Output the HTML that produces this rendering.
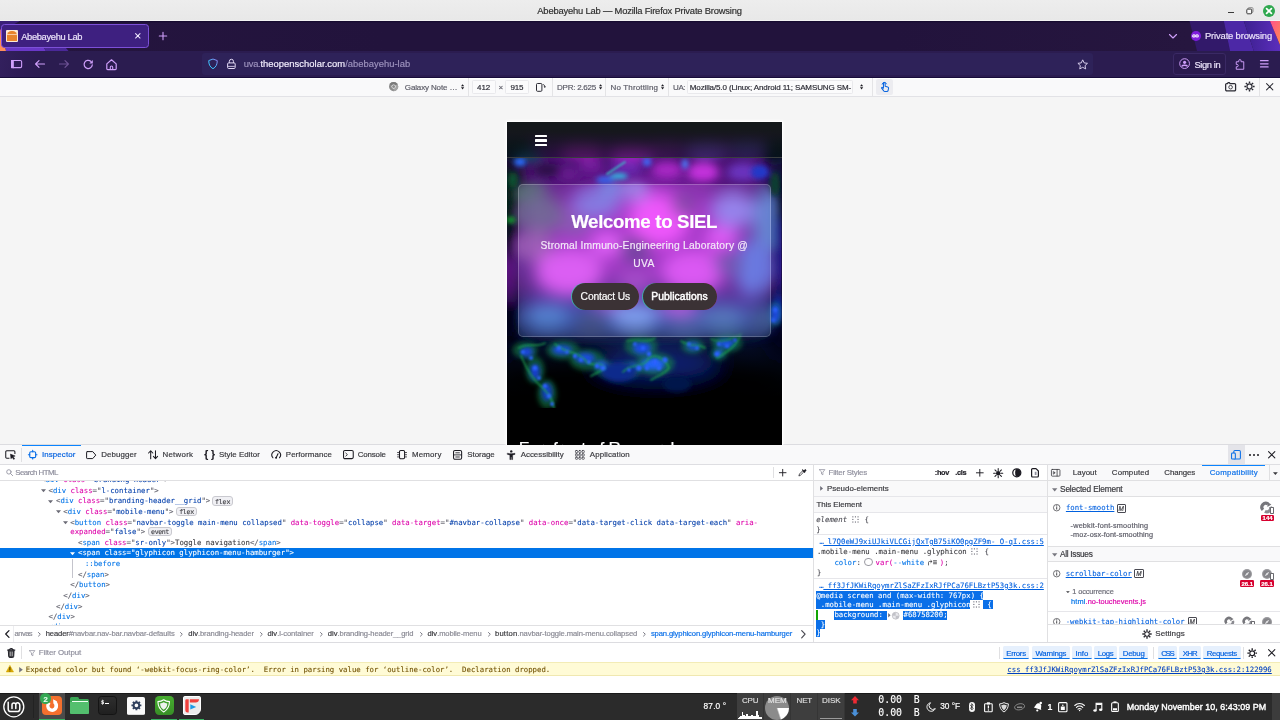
<!DOCTYPE html>
<html lang="en">
<head>
<meta charset="utf-8">
<title>Abebayehu Lab — Mozilla Firefox Private Browsing</title>
<style>
*{box-sizing:border-box;margin:0;padding:0}
html,body{width:1280px;height:720px;overflow:hidden;background:#f5f5f5}
body{font-family:"Liberation Sans",sans-serif;font-size:10px;color:#1c1b22;position:relative}
.abs{position:absolute}
.t{position:absolute;white-space:nowrap;line-height:1;font-family:"Liberation Sans",sans-serif}
.t.mono,.mono{font-family:"DejaVu Sans Mono","Liberation Mono",monospace}
svg{position:absolute;overflow:visible}
#titlebar{left:0;top:0;width:1280px;height:21px;background:linear-gradient(#ededed,#e8e8e8);box-shadow:inset 0 -0.8px 0 #f6f6f6}
#tabbar{left:0;top:21px;width:1280px;height:30px;background:linear-gradient(90deg,#25153f,#22133c 30%,#22133c 70%,#26163f 93%);box-shadow:inset 0 1.2px 0 #170b30;overflow:hidden}
#navbar{left:0;top:51px;width:1280px;height:26.6px;background:#2b1c50;border-bottom:1.4px solid #170c3a;overflow:hidden}
#rdmbar{left:0;top:77.5px;width:1280px;height:19px;background:#f9f9fa;border-bottom:1px solid #e2e2e6;box-shadow:inset 0 1.2px 0 #fff}
#viewport{left:0;top:97px;width:1280px;height:348px;background:#f5f5f5;overflow:hidden}
#phone{overflow:hidden;background:#000;box-shadow:0 0 0 1.2px #fefefe,0 0 4px 1px rgba(255,255,255,.8)}
#devtools{left:0;top:445px;width:1280px;height:247.5px;background:#fff;overflow:hidden}
#taskbar{left:0;top:692.5px;width:1280px;height:27.5px;background:#2b2b2b;box-shadow:inset 0 0.8px 0 #161616;overflow:hidden}
.t{opacity:.999}
.t{-webkit-text-stroke:0.18px currentColor}
.t.mono{-webkit-text-stroke:0.1px currentColor}

</style>
</head>
<body>
<div id="titlebar" class="abs">
<span class="t" style="left:537.30px;top:6.30px;font-size:9.40px;color:#2e2e2e;letter-spacing:-0.191px;">Abebayehu Lab — Mozilla Firefox Private Browsing</span>
<div class="abs" style="left:1228px;top:11.5px;width:6px;height:1.4px;background:#3a3a3a"></div>
<svg style="left:1246px;top:7px" width="8" height="8" viewBox="0 0 8 8" fill="none" stroke-width="1"><rect x="2.100" y="0.700" width="4.900" height="4.700" rx="0.800" stroke="#8e8e8e"/><rect x="0.800" y="2.100" width="4.900" height="4.700" rx="0.800" stroke="#3a3a3a" fill="#fafafa"/></svg>
<div class="abs" style="left:1262.7px;top:4.5px;width:12.2px;height:12.2px;border-radius:50%;background:#2fa84f"></div>
<svg style="left:1265.800px;top:7.600px" width="6" height="6" viewBox="0 0 6 6" stroke="#fff" stroke-width="1.700" stroke-linecap="round"><path d="M0.6 0.6L5.4 5.4M5.4 0.6L0.6 5.4"/></svg>
</div>
<div id="tabbar" class="abs">
<svg style="left:0;top:0" width="1280" height="30" viewBox="0 0 1280 30"><defs><linearGradient id="pk" x1="0" y1="0" x2="1" y2="1"><stop offset="0" stop-color="#ff4f8f"/><stop offset="1" stop-color="#ff8a4f"/></linearGradient><linearGradient id="b3g" x1="0" y1="0" x2="1" y2="0"><stop offset="0" stop-color="#3d2090"/><stop offset="1" stop-color="#5b2ebc"/></linearGradient><linearGradient id="og" x1="0" y1="0" x2="0" y2="1"><stop offset="0" stop-color="#c05a90"/><stop offset="0.35" stop-color="#ff8a55"/><stop offset="1" stop-color="#ff8f5a"/></linearGradient></defs><polygon points="1189.5,0 1223.800,0 1230,30 1197,30" fill="#32196a"/><polygon points="1223.800,0 1243.800,0 1253.800,30 1230,30" fill="#4c28a6"/><polygon points="1243.800,0 1270,0 1280,24 1280,30 1253.800,30" fill="url(#b3g)"/><polygon points="1270,0 1280,0 1280,24" fill="url(#pk)"/><polygon points="0,8 2.500,10 6,30 0,30" fill="url(#og)"/><polygon points="0,0 20,0 3,9 0,8" fill="#3a1f78"/><polygon points="5.500,27 44,27 46,30 6,30" fill="#6a38c8"/><polygon points="44,27 66,27 68.500,30 46,30" fill="#4a2898"/></svg>
<div class="abs" style="left:1.1px;top:3px;width:147.9px;height:24px;border-radius:3.5px;background:#3e2080;border:1px solid #7d50d8"></div>
<div class="abs" style="left:6.3px;top:8.6px;width:11.4px;height:12.4px;background:#fbead8;border-radius:1px"></div>
<div class="abs" style="left:7.2px;top:9.6px;width:9.6px;height:10.6px;background:#e8842c;border-radius:4.5px 4.5px 0.5px 0.5px"></div>
<div class="abs" style="left:7.2px;top:13.2px;width:9.6px;height:0.8px;background:#f8c9a0"></div>
<span class="t" style="left:21.20px;top:11.50px;font-size:9.30px;color:#ece4fb;letter-spacing:-0.319px;">Abebayehu Lab</span>
<svg style="left:135.3px;top:12.3px" width="5.6" height="5.6" viewBox="0 0 6 6" stroke="#f0e8ff" stroke-width="1.1" stroke-linecap="round"><path d="M0.6 0.6L5.4 5.4M5.4 0.6L0.6 5.4"/></svg>
<svg style="left:158.5px;top:11px" width="8" height="8" viewBox="0 0 8 8" stroke="#cf9ffa" stroke-width="1.100" stroke-linecap="round"><path d="M4 0.3V7.7M0.3 4H7.7"/></svg>
<svg style="left:1168.5px;top:12.5px" width="8" height="5" viewBox="0 0 8 5" fill="none" stroke="#cf9ffa" stroke-width="1.150" stroke-linecap="round" stroke-linejoin="round"><path d="M0.5 0.5L4 4L7.5 0.5"/></svg>
<div class="abs" style="left:1190.8px;top:10.2px;width:9.8px;height:9.8px;border-radius:50%;background:#7f1cdc"></div>
<svg style="left:1192.2px;top:13.2px" width="7" height="3.800" viewBox="0 0 14 7.600" fill="none" stroke="#fff" stroke-width="2.300"><ellipse cx="3.900" cy="3.800" rx="2.500" ry="2.300"/><ellipse cx="10.100" cy="3.800" rx="2.500" ry="2.300"/></svg>
<span class="t" style="left:1205.00px;top:10.40px;font-size:9.40px;color:#ece4fb;letter-spacing:-0.145px;">Private browsing</span>
</div>
<div id="navbar" class="abs">
<div class="abs" style="left:0;top:0;width:40px;height:26px;background:linear-gradient(100deg,#33205e 0%,#2e1c56 50%,rgba(43,27,79,0) 100%)"></div>
<svg style="left:10.5px;top:9.1px" width="11.2" height="8.2" viewBox="0 0 11.2 8.2" fill="none" stroke="#cf9ffa" stroke-width="1.100"><rect x="0.550" y="0.550" width="10.100" height="7.100" rx="1.300"/><rect x="0.550" y="0.550" width="1.700" height="7.100" fill="#cf9ffa"/></svg>
<svg style="left:35px;top:9px" width="10" height="8" viewBox="0 0 10 8" fill="none" stroke="#cf9ffa" stroke-width="1.200" stroke-linecap="round" stroke-linejoin="round"><path d="M9.5 4H0.8M4 0.6L0.6 4L4 7.4"/></svg>
<svg style="left:59px;top:9px;opacity:.4" width="10" height="8" viewBox="0 0 10 8" fill="none" stroke="#cf9ffa" stroke-width="1.200" stroke-linecap="round" stroke-linejoin="round"><path d="M0.5 4H9.2M6 0.6L9.4 4L6 7.4"/></svg>
<svg style="left:82.8px;top:8px" width="10.4" height="10.4" viewBox="0 0 20.800 20.800" fill="none" stroke="#cf9ffa" stroke-width="2.500" stroke-linecap="round"><path d="M15.600 4.600A8.200 8.200 0 1 0 18.600 11.600"/><path d="M12.600 8.800H19.600V1.800Z" fill="#cf9ffa" stroke="none"/></svg>
<svg style="left:106.3px;top:7.6px" width="11" height="11.400" viewBox="0 0 22 22.800" fill="none" stroke="#cf9ffa" stroke-width="2.400" stroke-linejoin="round"><path d="M1.600 9.800L11 1.600L20.400 9.800V19.400A1.800 1.800 0 0 1 18.600 21.200H3.400A1.800 1.800 0 0 1 1.600 19.400Z"/><path d="M8.600 21V16.400A2.400 2.400 0 0 1 13.400 16.400V21" stroke-width="2.200"/></svg>
<div class="abs" style="left:202.3px;top:2.2px;width:890.5px;height:21.4px;border-radius:3px;background:#2e2259"></div>
<svg style="left:207.5px;top:6.9px" width="10" height="11.800" viewBox="0 0 19 21" fill="none" stroke="url(#shg)" stroke-width="1.9" stroke-linejoin="round"><defs><linearGradient id="shg" x1="0" y1="1" x2="1" y2="0"><stop offset="0" stop-color="#2fd0ff"/><stop offset="0.55" stop-color="#4cb8ff"/><stop offset="1" stop-color="#9a7cf0"/></linearGradient></defs><path d="M9.5 1.3L17.6 4.2C17.6 11 15.5 16.5 9.5 19.6C3.5 16.5 1.4 11 1.4 4.200L9.5 1.3Z"/></svg>
<svg style="left:226.9px;top:6.9px" width="8.800" height="11.600" viewBox="0 0 17 21" fill="none" stroke="#e6dcf8" stroke-width="1.9" stroke-linejoin="round"><rect x="1.2" y="8.8" width="14.6" height="10.8" rx="2"/><path d="M4.5 8.8V5.8A4 4 0 0 1 12.5 5.8V8.8"/><path d="M2 15.5H15" stroke-width="1.6"/></svg>
<span class="t" style="left:243.80px;top:8.40px;font-size:9.40px;color:#9d92bd;letter-spacing:-0.284px;">uva.</span>
<span class="t" style="left:260.40px;top:8.40px;font-size:9.40px;color:#f4efff;letter-spacing:0.049px;">theopenscholar.com</span>
<span class="t" style="left:345.20px;top:8.40px;font-size:9.40px;color:#9d92bd;letter-spacing:0.026px;">/abebayehu-lab</span>
<svg style="left:1077px;top:7.6px" width="11.4" height="10.8" viewBox="0 0 24 23" fill="none" stroke="#e6dcf8" stroke-width="1.9" stroke-linejoin="round"><path d="M12 1.8L15.1 8.3L22.2 9.200L17 14.100L18.300 21.100L12 17.700L5.700 21.100L7 14.100L1.800 9.200L8.900 8.300Z"/></svg>
<div class="abs" style="left:1173.4px;top:2.2px;width:53px;height:21.6px;border-radius:3px;border:0.8px solid #3a2964;background:#2a1a4e"></div>
<svg style="left:1178.8px;top:7.4px" width="11.2" height="11.2" viewBox="0 0 22 22" fill="none" stroke="#cf9ffa" stroke-width="1.9"><circle cx="11" cy="11" r="9.600"/><circle cx="11" cy="8.6" r="3.100" fill="#cf9ffa" stroke="none"/><path d="M5.200 16.5C7 13.600 15 13.600 16.800 16.500" stroke-width="2.6"/></svg>
<span class="t" style="left:1194.40px;top:9.90px;font-size:9.30px;color:#ece4fb;letter-spacing:-0.348px;">Sign in</span>
<svg style="left:1235.4px;top:7.6px" width="10" height="11" viewBox="0 0 20 22" fill="none" stroke="#cf9ffa" stroke-width="1.9" stroke-linejoin="round"><path d="M7.5 5.500V3.500A2.300 2.300 0 0 1 12.100 3.500V5.500H17.500V20.500H2.500V15.500H4.200A2.300 2.300 0 0 0 4.200 10.900H2.500V5.500Z"/></svg>
<svg style="left:1259.8px;top:9.2px" width="8.6" height="7.6" viewBox="0 0 8.6 7.600" stroke="#cf9ffa" stroke-width="1.250" stroke-linecap="round"><path d="M0.5 0.7H8.100M0.500 3.800H8.100M0.500 6.900H8.100"/></svg>
</div>
<div id="rdmbar" class="abs">
<svg style="left:388.9px;top:4.9px" width="9.2" height="9.200" viewBox="0 0 20 20"><circle cx="10" cy="10" r="10" fill="#8c8c8c"/><path d="M10 10L1.300 5A10 10 0 0 1 18.700 5Z" fill="#7a7a7a"/><path d="M10 10L18.700 5A10 10 0 0 1 10 20Z" fill="#a4a4a4"/><circle cx="10" cy="10" r="4.600" fill="#f9f9fa"/><circle cx="10" cy="10" r="3.300" fill="#8c8c8c"/></svg>
<span class="t" style="left:404.80px;top:6.40px;font-size:8.00px;color:#5b5b66;letter-spacing:-0.135px;">Galaxy Note …</span>
<svg style="left:460.90px;top:6.60px" width="3.2" height="5.600" viewBox="0 0 3.200 5.600" fill="#1c1b22"><path d="M0 2.300L1.600 0.200L3.200 2.300ZM0 3.300L1.600 5.400L3.200 3.300Z"/></svg>
<div class="abs" style="left:468.0px;top:0;width:1px;height:18.5px;background:#e4e4e6"></div>
<div class="abs" style="left:472.1px;top:2.3px;width:23.5px;height:14.3px;border:1px solid #e9e9ec;border-radius:1.5px;background:#fbfbfc"></div>
<span class="t" style="left:477.10px;top:6.40px;font-size:8.00px;color:#2a2a33;letter-spacing:-0.086px;">412</span>
<div class="abs" style="left:505.2px;top:2.3px;width:23.5px;height:14.3px;border:1px solid #e9e9ec;border-radius:1.5px;background:#fbfbfc"></div>
<span class="t" style="left:510.40px;top:6.40px;font-size:8.00px;color:#2a2a33;letter-spacing:-0.086px;">915</span>
<span class="t" style="left:498.40px;top:6.20px;font-size:8.00px;color:#5b5b66;">×</span>
<svg style="left:536.2px;top:5.6px" width="10.5" height="8.8" viewBox="0 0 10.5 8.800" fill="none" stroke="#2a2a33" stroke-width="1"><rect x="0.5" y="0.5" width="5.4" height="7.8" rx="1"/><path d="M6.800 1.600C8.300 1.600 8.800 2.600 8.800 4" stroke-width="0.9"/><path d="M7.600 3.600L8.800 5.100L10 3.600Z" fill="#2a2a33" stroke="none"/></svg>
<div class="abs" style="left:552.0px;top:0;width:1px;height:18.5px;background:#e4e4e6"></div>
<span class="t" style="left:557.10px;top:6.40px;font-size:8.00px;color:#5b5b66;letter-spacing:-0.256px;">DPR: 2.625</span>
<svg style="left:598.80px;top:6.60px" width="3.2" height="5.600" viewBox="0 0 3.200 5.600" fill="#1c1b22"><path d="M0 2.300L1.600 0.200L3.200 2.300ZM0 3.300L1.600 5.400L3.200 3.300Z"/></svg>
<div class="abs" style="left:605.0px;top:0;width:1px;height:18.5px;background:#e4e4e6"></div>
<span class="t" style="left:610.60px;top:6.40px;font-size:8.00px;color:#5b5b66;letter-spacing:0.142px;">No Throttling</span>
<svg style="left:660.90px;top:6.60px" width="3.2" height="5.600" viewBox="0 0 3.200 5.600" fill="#1c1b22"><path d="M0 2.300L1.600 0.200L3.200 2.300ZM0 3.300L1.600 5.400L3.200 3.300Z"/></svg>
<div class="abs" style="left:668.0px;top:0;width:1px;height:18.5px;background:#e4e4e6"></div>
<span class="t" style="left:673.10px;top:6.40px;font-size:8.00px;color:#5b5b66;letter-spacing:-0.481px;">UA:</span>
<div class="abs" style="left:687.2px;top:2.3px;width:166px;height:14.3px;border:1px solid #e9e9ec;border-radius:1.5px;background:#fbfbfc"></div>
<span class="t" style="left:689.80px;top:6.40px;font-size:8.00px;color:#2a2a33;letter-spacing:-0.115px;">Mozilla/5.0 (Linux; Android 11; SAMSUNG SM-</span>
<svg style="left:860.00px;top:6.60px" width="3.2" height="5.600" viewBox="0 0 3.200 5.600" fill="#1c1b22"><path d="M0 2.300L1.600 0.200L3.200 2.300ZM0 3.300L1.600 5.400L3.200 3.300Z"/></svg>
<div class="abs" style="left:871.9px;top:0;width:1px;height:18.5px;background:#e4e4e6"></div>
<div class="abs" style="left:876.4px;top:1.200px;width:16.6px;height:16.6px;border-radius:2px;background:#ececf0"></div>
<svg style="left:879.6px;top:3.9px" width="9.600" height="11.200" viewBox="0 0 18 21" fill="none" stroke="#0a66e0" stroke-width="2" stroke-linecap="round" stroke-linejoin="round"><path d="M6.500 12V4.500A1.600 1.600 0 0 1 9.700 4.500V10L14.500 11.200C15.800 11.600 16.300 12.400 16.100 13.600L15.300 17.500C15 18.800 14.100 19.600 12.800 19.600H9.200C8.100 19.600 7.300 19.100 6.700 18.200L3 13.400C2.600 12.600 3.400 11.700 4.300 12.100L6.500 13.400"/><path d="M4 6A4.300 4.300 0 0 1 12.200 5.300" stroke-width="1.700"/></svg>
<svg style="left:1225px;top:4.6px" width="11.2" height="9.400" viewBox="0 0 22.400 18.800" fill="none" stroke="#2a2a33" stroke-width="2.500" stroke-linejoin="round"><path d="M3.500 3.200H5L6.200 1.400H9L10 3.200H19A2.200 2.200 0 0 1 21.200 5.400V15.400A2.200 2.200 0 0 1 19 17.600H3.500A2.200 2.200 0 0 1 1.300 15.400V5.400A2.200 2.200 0 0 1 3.500 3.200Z"/><circle cx="11.200" cy="10.400" r="3.600" stroke-width="1.700"/></svg>
<svg style="left:1243.90px;top:3.90px" width="11.00" height="11.00" viewBox="-10 -10 20 20" fill="none" stroke="#2a2a33"><circle cx="0" cy="0" r="4.600" stroke-width="2.200"/><path d="M6.20 0.00L9.30 0.00M4.38 4.38L6.58 6.58M0.00 6.20L0.00 9.30M-4.38 4.38L-6.58 6.58M-6.20 0.00L-9.30 0.00M-4.38 -4.38L-6.58 -6.58M-0.00 -6.20L-0.00 -9.30M4.38 -4.38L6.58 -6.58" stroke-width="2.600" stroke-linecap="butt"/></svg>
<div class="abs" style="left:1258.9px;top:0;width:1px;height:18.5px;background:#e4e4e6"></div>
<svg style="left:1266.2px;top:5.900px" width="7.400" height="7.400" viewBox="0 0 8 8" stroke="#2a2a33" stroke-width="1.100" stroke-linecap="round"><path d="M0.600 0.600L7.400 7.400M7.400 0.600L0.600 7.400"/></svg>
</div>
<div id="viewport" class="abs">
<div class="abs" style="left:0;top:347.200px;width:1280px;height:0.800px;background:#dcdce0"></div>
<div id="phone" class="abs" style="left:507.00px;top:25.00px;width:274.67px;height:325.00px">
<svg style="left:0;top:0" width="274.67" height="325" viewBox="0 0 274.67 325">
<defs><filter id="b10" x="-50%" y="-50%" width="200%" height="200%"><feGaussianBlur stdDeviation="10"/></filter><filter id="b6" x="-50%" y="-50%" width="200%" height="200%"><feGaussianBlur stdDeviation="5"/></filter><filter id="b3" x="-50%" y="-50%" width="200%" height="200%"><feGaussianBlur stdDeviation="2.4"/></filter><filter id="b1" x="-50%" y="-50%" width="200%" height="200%"><feGaussianBlur stdDeviation="0.9"/></filter><linearGradient id="basegrad" x1="0" y1="0" x2="0" y2="1"><stop offset="0" stop-color="#3a0f58"/><stop offset="0.16" stop-color="#4c1276"/><stop offset="0.24" stop-color="#5c1888"/><stop offset="0.58" stop-color="#5a1c90"/><stop offset="0.7" stop-color="#2a3aa0"/><stop offset="0.76" stop-color="#040c28"/><stop offset="0.96" stop-color="#000"/></linearGradient><clipPath id="imgclip"><rect x="0" y="0" width="274.67" height="286"/></clipPath></defs>
<rect width="274.67" height="325" fill="#000"/>
<g clip-path="url(#imgclip)">
<rect width="274.67" height="286" fill="url(#basegrad)"/>
<g filter="url(#b10)">
<ellipse cx="137" cy="110" rx="100" ry="50" fill="#9c28c2"/>
<ellipse cx="137" cy="198" rx="120" ry="13" fill="#2c48a8"/>
<ellipse cx="0" cy="70" rx="14" ry="45" fill="#04140c"/>
<ellipse cx="275" cy="70" rx="14" ry="45" fill="#04102c"/>
<ellipse cx="0" cy="200" rx="16" ry="40" fill="#050512"/>
<ellipse cx="275" cy="200" rx="16" ry="40" fill="#050512"/>
<ellipse cx="137" cy="262" rx="150" ry="22" fill="#000"/>
<ellipse cx="150" cy="240" rx="60" ry="16" fill="#0a2070"/>
</g>
<g filter="url(#b6)">
<ellipse cx="40" cy="48" rx="14" ry="7" fill="#2a0a44"/>
<ellipse cx="62" cy="52" rx="10" ry="6" fill="#6a1a90"/>
<ellipse cx="84" cy="44" rx="12" ry="7" fill="#741c9c"/>
<ellipse cx="120" cy="46" rx="16" ry="8" fill="#6a28b0"/>
<ellipse cx="160" cy="48" rx="16" ry="9" fill="#a828c4"/>
<ellipse cx="196" cy="50" rx="16" ry="10" fill="#c432dc"/>
<ellipse cx="236" cy="50" rx="16" ry="9" fill="#6a34c0"/>
<ellipse cx="10" cy="24" rx="16" ry="14" fill="#04141c"/>
<ellipse cx="22" cy="34" rx="12" ry="6" fill="#0a4a60"/>
<ellipse cx="268" cy="26" rx="14" ry="14" fill="#04141c"/>
<ellipse cx="75" cy="28" rx="22" ry="10" fill="#8a1aa4"/>
<ellipse cx="125" cy="30" rx="24" ry="9" fill="#a020c0"/>
<ellipse cx="160" cy="24" rx="16" ry="8" fill="#6a1a90"/>
<ellipse cx="200" cy="26" rx="22" ry="10" fill="#6a3cc0"/>
<ellipse cx="240" cy="24" rx="18" ry="9" fill="#4a3aa0"/>
<ellipse cx="24" cy="72" rx="16" ry="10" fill="#4e6a70"/>
<ellipse cx="34" cy="92" rx="24" ry="18" fill="#66588e"/>
<ellipse cx="88" cy="82" rx="24" ry="15" fill="#7a6ede"/>
<ellipse cx="104" cy="68" rx="12" ry="7" fill="#6a88e4"/>
<ellipse cx="152" cy="98" rx="30" ry="26" fill="#ee46fc"/>
<ellipse cx="176" cy="84" rx="11" ry="10" fill="#6a3a94"/>
<ellipse cx="226" cy="88" rx="22" ry="18" fill="#8c78ea"/>
<ellipse cx="258" cy="100" rx="12" ry="34" fill="#5a7ad0"/>
<ellipse cx="128" cy="70" rx="14" ry="8" fill="#9484ea"/>
<ellipse cx="28" cy="124" rx="18" ry="16" fill="#9450b0"/>
<ellipse cx="62" cy="150" rx="34" ry="24" fill="#d850f2"/>
<ellipse cx="128" cy="128" rx="16" ry="12" fill="#56308c"/>
<ellipse cx="68" cy="104" rx="14" ry="9" fill="#7a50a8"/>
<ellipse cx="128" cy="160" rx="18" ry="10" fill="#a040c8"/>
<ellipse cx="186" cy="150" rx="32" ry="22" fill="#d84af2"/>
<ellipse cx="246" cy="146" rx="18" ry="28" fill="#5c70e0"/>
<ellipse cx="214" cy="116" rx="16" ry="12" fill="#e04cf8"/>
<ellipse cx="100" cy="122" rx="16" ry="12" fill="#e254fa"/>
<ellipse cx="222" cy="142" rx="14" ry="12" fill="#6444a8"/>
<ellipse cx="40" cy="194" rx="22" ry="11" fill="#4478cc"/>
<ellipse cx="84" cy="200" rx="16" ry="9" fill="#34447c"/>
<ellipse cx="128" cy="194" rx="24" ry="12" fill="#7698f0"/>
<ellipse cx="172" cy="186" rx="20" ry="8" fill="#b850e0"/>
<ellipse cx="178" cy="203" rx="18" ry="7" fill="#3c5aa8"/>
<ellipse cx="216" cy="196" rx="22" ry="10" fill="#4a70b8"/>
<ellipse cx="254" cy="198" rx="12" ry="10" fill="#34508c"/>
<ellipse cx="100" cy="182" rx="14" ry="6" fill="#a850d0"/>
<ellipse cx="137" cy="213" rx="122" ry="4" fill="#1c2858"/>
<ellipse cx="3" cy="150" rx="5" ry="36" fill="#5a1478"/>
<ellipse cx="2" cy="100" rx="5" ry="40" fill="#050a0c"/>
<ellipse cx="4" cy="75" rx="6" ry="22" fill="#062014"/>
<ellipse cx="2" cy="200" rx="5" ry="20" fill="#04040c"/>
<ellipse cx="272" cy="120" rx="5" ry="50" fill="#0c1680"/>
<ellipse cx="272" cy="80" rx="4" ry="20" fill="#04100c"/>
<ellipse cx="271" cy="185" rx="5" ry="14" fill="#1838c8"/>
</g>
<g filter="url(#b3)" opacity=".55">
<ellipse cx="18" cy="228" rx="12.5" ry="8.5" fill="#128c48"/>
<ellipse cx="28" cy="248" rx="9.5" ry="13.5" fill="#128c48"/>
<ellipse cx="40" cy="272" rx="9.5" ry="14.5" fill="#128c48"/>
<ellipse cx="56" cy="228" rx="16.5" ry="9.5" fill="#128c48"/>
<ellipse cx="80" cy="238" rx="17.5" ry="10.5" fill="#128c48"/>
<ellipse cx="96" cy="246" rx="10.5" ry="7.5" fill="#128c48"/>
<ellipse cx="134" cy="224" rx="16.5" ry="10.5" fill="#128c48"/>
<ellipse cx="148" cy="242" rx="19.5" ry="11.5" fill="#128c48"/>
<ellipse cx="124" cy="247" rx="11.5" ry="7.5" fill="#128c48"/>
<ellipse cx="186" cy="224" rx="11.5" ry="7.5" fill="#128c48"/>
<ellipse cx="220" cy="221" rx="15.5" ry="9.5" fill="#128c48"/>
<ellipse cx="212" cy="232" rx="8.5" ry="6.5" fill="#128c48"/>
<ellipse cx="268" cy="192" rx="6.5" ry="11.5" fill="#128c48"/>
</g>
<g filter="url(#b3)">
<ellipse cx="13" cy="40" rx="6" ry="4" fill="#2a6cff"/>
<ellipse cx="98" cy="58" rx="9" ry="4" fill="#3a60e8"/>
<ellipse cx="112" cy="54" rx="9" ry="3" fill="#30b8e0"/>
<ellipse cx="140" cy="40" rx="4" ry="4" fill="#3a70ff"/>
<ellipse cx="178" cy="42" rx="3" ry="5" fill="#4a80ff"/>
<ellipse cx="253" cy="50" rx="9" ry="7" fill="#2238c8"/>
<ellipse cx="4" cy="98" rx="5" ry="3" fill="#18b030"/>
<ellipse cx="268" cy="62" rx="5" ry="12" fill="#0a4030"/>
<ellipse cx="6" cy="58" rx="5" ry="8" fill="#0a5030"/>
<ellipse cx="20" cy="230" rx="6" ry="5" fill="#1a44e0"/>
<ellipse cx="28" cy="250" rx="5" ry="8" fill="#183cd0"/>
<ellipse cx="40" cy="270" rx="5" ry="9" fill="#183cd0"/>
<ellipse cx="55" cy="228" rx="10" ry="4.5" fill="#1c4ce4"/>
<ellipse cx="78" cy="236" rx="10" ry="5" fill="#1c4ce4"/>
<ellipse cx="94" cy="243" rx="6" ry="4" fill="#2058ee"/>
<ellipse cx="135" cy="226" rx="9" ry="6" fill="#1c4ce4"/>
<ellipse cx="146" cy="242" rx="12" ry="6" fill="#2264fa"/>
<ellipse cx="125" cy="245" rx="6" ry="4" fill="#1c4ce4"/>
<ellipse cx="186" cy="224" rx="6" ry="4" fill="#1c4ce4"/>
<ellipse cx="219" cy="221" rx="9" ry="4.5" fill="#1c54ea"/>
<ellipse cx="212" cy="231" rx="4" ry="3" fill="#2264fa"/>
<ellipse cx="268" cy="192" rx="5" ry="10" fill="#1c4ce4"/>
<ellipse cx="112" cy="250" rx="18" ry="10" fill="#0c2c8c"/>
<ellipse cx="170" cy="262" rx="14" ry="8" fill="#06184c"/>
</g>
<g filter="url(#b1)" fill="none" stroke="#1fa050" stroke-width="1.800" stroke-linecap="round" opacity=".8">
<path d="M12 226C20 220 30 226 38 221M14 234C20 248 28 260 36 266C44 274 46 280 47 286M48 222C58 232 70 228 80 240C86 246 92 238 98 246C92 250 88 252 84 254"/>
<path d="M120 219C130 216 140 222 148 216M116 250C124 240 136 248 142 236C150 230 160 240 162 246C158 252 150 254 144 258"/>
<path d="M174 219C184 226 192 221 198 226M204 217C214 222 224 217 234 212C230 224 220 230 210 236"/>
<path d="M100 52L118 40" stroke="#30d8c8"/>
</g>
<g filter="url(#b1)" fill="#2c62ff">
<circle cx="16" cy="230" r="2.1"/>
<circle cx="24" cy="236" r="2.0"/>
<circle cx="28" cy="246" r="2.5"/>
<circle cx="32" cy="256" r="1.9"/>
<circle cx="38" cy="264" r="2.3"/>
<circle cx="42" cy="274" r="2.2"/>
<circle cx="45" cy="282" r="1.9"/>
<circle cx="52" cy="226" r="2.3"/>
<circle cx="60" cy="230" r="1.8"/>
<circle cx="68" cy="234" r="2.2"/>
<circle cx="74" cy="238" r="1.9"/>
<circle cx="82" cy="240" r="1.9"/>
<circle cx="90" cy="244" r="2.2"/>
<circle cx="96" cy="246" r="2.6"/>
<circle cx="128" cy="222" r="1.9"/>
<circle cx="136" cy="226" r="2.0"/>
<circle cx="142" cy="232" r="2.4"/>
<circle cx="148" cy="240" r="2.7"/>
<circle cx="152" cy="246" r="2.4"/>
<circle cx="140" cy="246" r="2.2"/>
<circle cx="132" cy="246" r="2.8"/>
<circle cx="122" cy="248" r="1.8"/>
<circle cx="158" cy="238" r="2.7"/>
<circle cx="182" cy="222" r="2.1"/>
<circle cx="190" cy="226" r="1.9"/>
<circle cx="212" cy="222" r="1.9"/>
<circle cx="220" cy="224" r="2.1"/>
<circle cx="210" cy="232" r="2.6"/>
<circle cx="228" cy="218" r="2.0"/>
<circle cx="268" cy="188" r="2.4"/>
<circle cx="266" cy="198" r="2.4"/>
</g>
</g>
</svg>
<div class="abs" style="left:0;top:0;width:100%;height:36px;background:linear-gradient(180deg,rgba(20,24,26,1) 0%,rgba(20,24,26,.97) 25%,rgba(10,14,18,.45) 100%);-webkit-backdrop-filter:blur(5px);backdrop-filter:blur(5px);border-bottom:0.7px solid rgba(255,255,255,.16)"></div>
<div class="abs" style="left:28.2px;top:13.00px;width:12px;height:2.2px;border-radius:.6px;background:#fff"></div>
<div class="abs" style="left:28.2px;top:17.40px;width:12px;height:2.2px;border-radius:.6px;background:#fff"></div>
<div class="abs" style="left:28.2px;top:21.80px;width:12px;height:2.2px;border-radius:.6px;background:#fff"></div>
<div class="abs" style="left:10.7px;top:62.400px;width:253.3px;height:152.800px;border-radius:5px;background:rgba(255,255,255,.085);border:0.7px solid rgba(255,255,255,.22);-webkit-backdrop-filter:blur(7px);backdrop-filter:blur(7px);box-shadow:0 2px 8px rgba(0,0,0,.25)"></div>
<span class="t" style="left:64.20px;top:91.00px;font-size:18.67px;color:#fff;font-weight:bold;letter-spacing:-0.334px;">Welcome to SIEL</span>
<span class="t" style="left:33.50px;top:119.20px;font-size:10.30px;color:#f3e9f8;letter-spacing:0.210px;">Stromal Immuno-Engineering Laboratory @</span>
<span class="t" style="left:126.20px;top:136.60px;font-size:10.30px;color:#f3e9f8;letter-spacing:0.393px;">UVA</span>
<div class="abs" style="left:64.15px;top:160.65px;width:68.20px;height:27.7px;border-radius:13.85px;opacity:.75;background:linear-gradient(60deg,#2ec8a4 0%,#2ec8a4 30%,#ff2a9c 70%,#ff2a9c 100%)"></div>
<div class="abs" style="left:64.50px;top:161px;width:67.50px;height:27px;border-radius:13.5px;background:#3b3235"></div>
<div class="abs" style="left:135.15px;top:160.65px;width:75.20px;height:27.7px;border-radius:13.85px;opacity:.75;background:linear-gradient(60deg,#2ec8a4 0%,#2ec8a4 30%,#ff2a9c 70%,#ff2a9c 100%)"></div>
<div class="abs" style="left:135.50px;top:161px;width:74.50px;height:27px;border-radius:13.5px;background:#3b3235"></div>
<span class="t" style="left:73.60px;top:170.20px;font-size:10.30px;color:#fff;letter-spacing:-0.154px;">Contact Us</span>
<span class="t" style="left:144.30px;top:170.20px;font-size:10.30px;color:#fff;letter-spacing:0.081px;-webkit-text-stroke:0.45px #fff;">Publications</span>
<span class="t" style="left:11.75px;top:318.20px;font-size:17.20px;color:#fff;letter-spacing:-0.295px;">Forefront of Research</span>
</div>
</div>
<div id="devtools" class="abs">
<div class="abs" style="left:0.00px;top:0.00px;width:1280.00px;height:20.00px;background:#f9f9fa;border-bottom:1px solid #dedee2"></div>
<div class="abs" style="left:22.00px;top:0.00px;width:59.00px;height:1.40px;background:#0a84ff"></div>
<svg style="left:5px;top:5.4px" width="11.4" height="9.6" viewBox="0 0 23 19" fill="none" stroke="#1c1b22" stroke-width="2.1" stroke-linejoin="round"><path d="M9 16.500H3.500A2 2 0 0 1 1.500 14.500V3.500A2 2 0 0 1 3.500 1.500H18A2 2 0 0 1 20 3.500V8"/><path d="M11 8L20.500 12L16.500 13.500L19.500 17.500L17.500 18.800L14.700 14.800L12 17.500Z" fill="#1c1b22" stroke-width="1"/></svg>
<div class="abs" style="left:21.30px;top:3.00px;width:1.00px;height:14.00px;background:#e0e0e2"></div>
<span class="t" style="left:41.90px;top:6.40px;font-size:7.90px;color:#0060df;letter-spacing:0.126px;">Inspector</span>
<span class="t" style="left:101.25px;top:6.40px;font-size:7.90px;color:#38383d;letter-spacing:0.104px;">Debugger</span>
<span class="t" style="left:162.50px;top:6.40px;font-size:7.90px;color:#38383d;letter-spacing:0.264px;">Network</span>
<span class="t" style="left:218.90px;top:6.40px;font-size:7.90px;color:#38383d;letter-spacing:0.062px;">Style Editor</span>
<span class="t" style="left:285.80px;top:6.40px;font-size:7.90px;color:#38383d;letter-spacing:0.084px;">Performance</span>
<span class="t" style="left:357.70px;top:6.40px;font-size:7.90px;color:#38383d;letter-spacing:-0.122px;">Console</span>
<span class="t" style="left:412.00px;top:6.40px;font-size:7.90px;color:#38383d;letter-spacing:0.167px;">Memory</span>
<span class="t" style="left:467.30px;top:6.40px;font-size:7.90px;color:#38383d;letter-spacing:-0.034px;">Storage</span>
<span class="t" style="left:520.70px;top:6.40px;font-size:7.90px;color:#38383d;letter-spacing:0.009px;">Accessibility</span>
<span class="t" style="left:589.80px;top:6.40px;font-size:7.90px;color:#38383d;letter-spacing:0.126px;">Application</span>
<svg style="left:27.60px;top:5.00px" width="9.40" height="9.40" viewBox="0 0 19 19" fill="none" stroke="#0a6fe8" stroke-width="2.30" stroke-linejoin="round" stroke-linecap="round"><rect x="3.500" y="3.500" width="12" height="12" rx="2.500"/><path d="M9.500 0.800V3.500M9.500 15.500V18.200M0.800 9.500H3.500M15.500 9.500H18.200"/></svg>
<svg style="left:86.40px;top:5.60px" width="10.50" height="8.20" viewBox="0 0 21 16.400" fill="none" stroke="#1c1b22" stroke-width="2.00" stroke-linejoin="round" stroke-linecap="round"><path d="M2.500 1.200H13.500L19.600 8.200L13.500 15.200H2.500A1.300 1.300 0 0 1 1.200 13.900V2.500A1.300 1.300 0 0 1 2.500 1.200Z"/></svg>
<svg style="left:147.70px;top:5.20px" width="10.20" height="9.40" viewBox="0 0 20.400 18.800" fill="none" stroke="#1c1b22" stroke-width="2.10" stroke-linejoin="round" stroke-linecap="round"><path d="M5.400 17.500V1.800M1.200 6L5.400 1.500L9.600 6M15 1.300V17M10.800 12.800L15 17.300L19.200 12.800"/></svg>
<span class="t" style="left:204.30px;top:5.00px;font-size:10.20px;color:#1c1b22;font-weight:bold;letter-spacing:2.731px;">{}</span>
<svg style="left:270.90px;top:5.20px" width="10.40" height="9.40" viewBox="0 0 20.800 18.800" fill="none" stroke="#1c1b22" stroke-width="2.10" stroke-linejoin="round" stroke-linecap="round"><path d="M3.800 15.500A8.600 8.600 0 1 1 17 15.500"/><path d="M10.400 15.300L14 7.500" stroke-width="2.200"/><circle cx="10.200" cy="15.600" r="2" fill="#1c1b22" stroke="none"/></svg>
<svg style="left:342.80px;top:5.30px" width="10.80" height="9.20" viewBox="0 0 21.600 18.400" fill="none" stroke="#1c1b22" stroke-width="2.10" stroke-linejoin="round" stroke-linecap="round"><rect x="1.100" y="1.100" width="19.400" height="16.200" rx="2.600"/><path d="M5.600 6.200L8.800 9.200L5.600 12.200" stroke-width="1.700"/></svg>
<svg style="left:397.20px;top:5.20px" width="10.10" height="9.40" viewBox="0 0 20.200 18.800" fill="none" stroke="#1c1b22" stroke-width="2.10" stroke-linejoin="round" stroke-linecap="round"><rect x="5" y="1.200" width="10.200" height="16.400" rx="2.400"/><path d="M1 5H4M1 9.400H4M1 13.800H4M16.200 5H19.200M16.200 9.400H19.200M16.200 13.800H19.200" stroke-width="1.500"/></svg>
<svg style="left:453.00px;top:5.00px" width="9.20" height="9.80" viewBox="0 0 18.400 19.600" fill="none" stroke="#1c1b22" stroke-width="2.10" stroke-linejoin="round" stroke-linecap="round"><rect x="1.100" y="1.100" width="16.200" height="17.400" rx="2.800"/><path d="M1.500 9.800H17M5.600 5.600H12.800M5.600 14H12.800" stroke-width="1.700"/></svg>
<svg style="left:506.50px;top:4.80px" width="8.50" height="10.20" viewBox="0 0 17 20.400" fill="none" stroke="#1c1b22" stroke-width="1.00" stroke-linejoin="round" stroke-linecap="round"><circle cx="8.500" cy="2.800" r="2.400" fill="#1c1b22" stroke="none"/><path d="M1.200 6.600C5 7.600 12 7.600 15.800 6.600V8.800L11.200 9.800V19.200H9.400V14H7.600V19.200H5.800V9.800L1.200 8.800Z" fill="#1c1b22" stroke-width="1"/></svg>
<svg style="left:575.00px;top:5.00px" width="10.10" height="10.10" viewBox="0 0 20.200 20.200" fill="none" stroke="#3a3a42" stroke-width="1.50" stroke-linejoin="round" stroke-linecap="round"><rect x="1.0" y="1.0" width="4.400" height="4.400" rx="1.300"/><rect x="7.6" y="1.0" width="4.400" height="4.400" rx="1.300"/><rect x="14.2" y="1.0" width="4.400" height="4.400" rx="1.300"/><rect x="1.0" y="7.6" width="4.400" height="4.400" rx="1.300"/><rect x="7.6" y="7.6" width="4.400" height="4.400" rx="1.300"/><rect x="14.2" y="7.6" width="4.400" height="4.400" rx="1.300"/><rect x="1.0" y="14.2" width="4.400" height="4.400" rx="1.300"/><rect x="7.6" y="14.2" width="4.400" height="4.400" rx="1.300"/><rect x="14.2" y="14.2" width="4.400" height="4.400" rx="1.300"/></svg>
<div class="abs" style="left:1228.00px;top:0.30px;width:16.80px;height:18.60px;background:#e4e4e9"></div>
<svg style="left:1231.20px;top:5.00px" width="10.00" height="9.60" viewBox="0 0 20 19.200" fill="none" stroke="#0a6fe8" stroke-width="2.10" stroke-linejoin="round" stroke-linecap="round"><rect x="5.600" y="1.100" width="13.200" height="17" rx="2.200"/><rect x="1.100" y="6" width="7.600" height="12.100" rx="1.800" fill="#e4e4e9"/></svg>
<div class="abs" style="left:1249.00px;top:8.90px;width:1.90px;height:1.90px;background:#1c1b22;border-radius:50%"></div>
<div class="abs" style="left:1252.90px;top:8.90px;width:1.90px;height:1.90px;background:#1c1b22;border-radius:50%"></div>
<div class="abs" style="left:1256.80px;top:8.90px;width:1.90px;height:1.90px;background:#1c1b22;border-radius:50%"></div>
<svg style="left:1267.60px;top:6.00px" width="7.40" height="7.40" viewBox="0 0 8 8" fill="none" stroke="#1c1b22" stroke-width="1.15" stroke-linejoin="round" stroke-linecap="round"><path d="M0.600 0.600L7.400 7.400M7.400 0.600L0.600 7.400"/></svg>
<div class="abs" style="left:0.00px;top:20.00px;width:813.00px;height:16.20px;background:#fff;border-bottom:1px solid #e0e0e2"></div>
<svg style="left:5.50px;top:23.80px" width="7.20" height="7.20" viewBox="0 0 14.400 14.400" fill="none" stroke="#8f8f9d" stroke-width="1.70" stroke-linejoin="round" stroke-linecap="round"><circle cx="5.800" cy="5.800" r="4.400"/><path d="M9.200 9.200L13.400 13.400"/></svg>
<span class="t" style="left:15.30px;top:24.30px;font-size:7.90px;color:#8f8f9d;letter-spacing:-0.562px;">Search HTML</span>
<div class="abs" style="left:772.50px;top:22.00px;width:1.00px;height:11.00px;background:#e0e0e2"></div>
<svg style="left:779.40px;top:24.00px" width="7.40" height="7.40" viewBox="0 0 8 8" fill="none" stroke="#1c1b22" stroke-width="1.00" stroke-linejoin="round" stroke-linecap="round"><path d="M4 0.400V7.600M0.400 4H7.600"/></svg>
<svg style="left:798.20px;top:23.40px" width="8.60" height="8.60" viewBox="0 0 17.200 17.200" fill="none" stroke="#1c1b22" stroke-width="1.50" stroke-linejoin="round" stroke-linecap="round"><path d="M2 15.200L3 12L9.600 5.400L11.800 7.600L5.200 14.200Z" stroke-width="1.500"/><path d="M9 3.800L13.400 8.200" stroke-width="2.200"/><path d="M10.800 6.400L13.600 3.600A1.500 1.500 0 0 1 15.700 5.700L12.900 8.500" fill="#1c1b22" stroke-width="1.600"/></svg>
<div class="abs" style="left:0.00px;top:36.00px;width:813.00px;height:143.60px;background:#fff"></div>
<div class="abs" style="left:0;top:36px;width:813px;height:12px;overflow:hidden"><div class="abs" style="left:0;top:-36px"><span class="t mono" style="left:41.20px;top:30.60px;font-size:7.32px;color:#5b5b66;">&lt;</span><span class="t mono" style="left:45.61px;top:30.60px;font-size:7.32px;color:#0074e8;letter-spacing:0.002px;">div</span><span class="t mono" style="left:58.83px;top:30.60px;font-size:7.32px;color:#5b5b66;"> </span><span class="t mono" style="left:63.24px;top:30.60px;font-size:7.32px;color:#dd00a9;letter-spacing:0.005px;">class</span><span class="t mono" style="left:85.28px;top:30.60px;font-size:7.32px;color:#5b5b66;letter-spacing:0.002px;">="</span><span class="t mono" style="left:94.10px;top:30.60px;font-size:7.32px;color:#003eaa;letter-spacing:0.005px;">branding-header</span><span class="t mono" style="left:160.22px;top:30.60px;font-size:7.32px;color:#5b5b66;letter-spacing:0.002px;">"&gt;</span></div></div>
<svg style="left:41.00px;top:42.90px" width="5.0" height="5.0" viewBox="0 0 5.0 5.0" fill="#6b6b76"><path d="M0 1.2H5.0L2.50 4.2Z"/></svg>
<span class="t mono" style="left:48.50px;top:41.50px;font-size:7.32px;color:#5b5b66;">&lt;</span><span class="t mono" style="left:52.91px;top:41.50px;font-size:7.32px;color:#0074e8;letter-spacing:0.002px;">div</span><span class="t mono" style="left:66.13px;top:41.50px;font-size:7.32px;color:#5b5b66;"> </span><span class="t mono" style="left:70.54px;top:41.50px;font-size:7.32px;color:#dd00a9;letter-spacing:0.005px;">class</span><span class="t mono" style="left:92.58px;top:41.50px;font-size:7.32px;color:#5b5b66;letter-spacing:0.002px;">="</span><span class="t mono" style="left:101.40px;top:41.50px;font-size:7.32px;color:#003eaa;letter-spacing:0.005px;">l-container</span><span class="t mono" style="left:149.88px;top:41.50px;font-size:7.32px;color:#5b5b66;letter-spacing:0.002px;">"&gt;</span>
<svg style="left:48.30px;top:53.70px" width="5.0" height="5.0" viewBox="0 0 5.0 5.0" fill="#6b6b76"><path d="M0 1.2H5.0L2.50 4.2Z"/></svg>
<span class="t mono" style="left:56.00px;top:52.20px;font-size:7.32px;color:#5b5b66;">&lt;</span><span class="t mono" style="left:60.41px;top:52.20px;font-size:7.32px;color:#0074e8;letter-spacing:0.002px;">div</span><span class="t mono" style="left:73.63px;top:52.20px;font-size:7.32px;color:#5b5b66;"> </span><span class="t mono" style="left:78.04px;top:52.20px;font-size:7.32px;color:#dd00a9;letter-spacing:0.005px;">class</span><span class="t mono" style="left:100.08px;top:52.20px;font-size:7.32px;color:#5b5b66;letter-spacing:0.002px;">="</span><span class="t mono" style="left:108.90px;top:52.20px;font-size:7.32px;color:#003eaa;letter-spacing:0.005px;">branding-header__grid</span><span class="t mono" style="left:201.46px;top:52.20px;font-size:7.32px;color:#5b5b66;letter-spacing:0.002px;">"&gt;</span>
<div class="abs" style="left:212.00px;top:51.40px;width:21.20px;height:9.20px;border:0.7px solid #c9c9cf;border-radius:3px;background:#f0f0f4"></div><span class="t mono" style="left:215.00px;top:53.50px;font-size:6.60px;color:#38383d;letter-spacing:-0.173px;">flex</span>
<svg style="left:55.70px;top:64.20px" width="5.0" height="5.0" viewBox="0 0 5.0 5.0" fill="#6b6b76"><path d="M0 1.2H5.0L2.50 4.2Z"/></svg>
<span class="t mono" style="left:63.30px;top:62.80px;font-size:7.32px;color:#5b5b66;">&lt;</span><span class="t mono" style="left:67.71px;top:62.80px;font-size:7.32px;color:#0074e8;letter-spacing:0.002px;">div</span><span class="t mono" style="left:80.93px;top:62.80px;font-size:7.32px;color:#5b5b66;"> </span><span class="t mono" style="left:85.34px;top:62.80px;font-size:7.32px;color:#dd00a9;letter-spacing:0.005px;">class</span><span class="t mono" style="left:107.38px;top:62.80px;font-size:7.32px;color:#5b5b66;letter-spacing:0.002px;">="</span><span class="t mono" style="left:116.20px;top:62.80px;font-size:7.32px;color:#003eaa;letter-spacing:0.005px;">mobile-menu</span><span class="t mono" style="left:164.68px;top:62.80px;font-size:7.32px;color:#5b5b66;letter-spacing:0.002px;">"&gt;</span>
<div class="abs" style="left:176.20px;top:62.00px;width:20.60px;height:9.20px;border:0.7px solid #c9c9cf;border-radius:3px;background:#f0f0f4"></div><span class="t mono" style="left:179.20px;top:64.10px;font-size:6.60px;color:#38383d;letter-spacing:-0.323px;">flex</span>
<svg style="left:63.10px;top:74.80px" width="5.0" height="5.0" viewBox="0 0 5.0 5.0" fill="#6b6b76"><path d="M0 1.2H5.0L2.50 4.2Z"/></svg>
<span class="t mono" style="left:70.30px;top:74.00px;font-size:7.32px;color:#5b5b66;">&lt;</span><span class="t mono" style="left:74.71px;top:74.00px;font-size:7.32px;color:#0074e8;letter-spacing:0.004px;">button</span><span class="t mono" style="left:101.16px;top:74.00px;font-size:7.32px;color:#5b5b66;"> </span><span class="t mono" style="left:105.56px;top:74.00px;font-size:7.32px;color:#dd00a9;letter-spacing:0.005px;">class</span><span class="t mono" style="left:127.60px;top:74.00px;font-size:7.32px;color:#5b5b66;letter-spacing:0.002px;">="</span><span class="t mono" style="left:136.42px;top:74.00px;font-size:7.32px;color:#003eaa;letter-spacing:0.005px;">navbar-toggle main-menu collapsed</span><span class="t mono" style="left:281.88px;top:74.00px;font-size:7.32px;color:#5b5b66;letter-spacing:0.002px;">" </span><span class="t mono" style="left:290.70px;top:74.00px;font-size:7.32px;color:#dd00a9;letter-spacing:0.005px;">data-toggle</span><span class="t mono" style="left:339.19px;top:74.00px;font-size:7.32px;color:#5b5b66;letter-spacing:0.002px;">="</span><span class="t mono" style="left:348.00px;top:74.00px;font-size:7.32px;color:#003eaa;letter-spacing:0.004px;">collapse</span><span class="t mono" style="left:383.27px;top:74.00px;font-size:7.32px;color:#5b5b66;letter-spacing:0.002px;">" </span><span class="t mono" style="left:392.08px;top:74.00px;font-size:7.32px;color:#dd00a9;letter-spacing:0.005px;">data-target</span><span class="t mono" style="left:440.57px;top:74.00px;font-size:7.32px;color:#5b5b66;letter-spacing:0.002px;">="</span><span class="t mono" style="left:449.39px;top:74.00px;font-size:7.32px;color:#003eaa;letter-spacing:0.005px;">#navbar-collapse</span><span class="t mono" style="left:519.92px;top:74.00px;font-size:7.32px;color:#5b5b66;letter-spacing:0.002px;">" </span><span class="t mono" style="left:528.73px;top:74.00px;font-size:7.32px;color:#dd00a9;letter-spacing:0.005px;">data-once</span><span class="t mono" style="left:568.40px;top:74.00px;font-size:7.32px;color:#5b5b66;letter-spacing:0.002px;">="</span><span class="t mono" style="left:577.22px;top:74.00px;font-size:7.32px;color:#003eaa;letter-spacing:0.005px;">data-target-click data-target-each</span><span class="t mono" style="left:727.09px;top:74.00px;font-size:7.32px;color:#5b5b66;letter-spacing:0.002px;">" </span><span class="t mono" style="left:735.91px;top:74.00px;font-size:7.32px;color:#dd00a9;letter-spacing:0.005px;">aria-</span>
<span class="t mono" style="left:70.30px;top:82.80px;font-size:7.32px;color:#dd00a9;letter-spacing:0.004px;">expanded</span><span class="t mono" style="left:105.56px;top:82.80px;font-size:7.32px;color:#5b5b66;letter-spacing:0.002px;">="</span><span class="t mono" style="left:114.38px;top:82.80px;font-size:7.32px;color:#003eaa;letter-spacing:0.005px;">false</span><span class="t mono" style="left:136.42px;top:82.80px;font-size:7.32px;color:#5b5b66;letter-spacing:0.002px;">"&gt;</span>
<div class="abs" style="left:148.10px;top:82.00px;width:23.70px;height:9.20px;border:0.7px solid #c9c9cf;border-radius:3px;background:#f0f0f4"></div><span class="t mono" style="left:151.10px;top:84.10px;font-size:6.60px;color:#38383d;letter-spacing:-0.432px;">event</span>
<span class="t mono" style="left:78.00px;top:94.00px;font-size:7.32px;color:#5b5b66;">&lt;</span><span class="t mono" style="left:82.41px;top:94.00px;font-size:7.32px;color:#0074e8;letter-spacing:0.002px;">span</span><span class="t mono" style="left:100.04px;top:94.00px;font-size:7.32px;color:#5b5b66;"> </span><span class="t mono" style="left:104.45px;top:94.00px;font-size:7.32px;color:#dd00a9;letter-spacing:0.005px;">class</span><span class="t mono" style="left:126.49px;top:94.00px;font-size:7.32px;color:#5b5b66;letter-spacing:0.002px;">="</span><span class="t mono" style="left:135.30px;top:94.00px;font-size:7.32px;color:#003eaa;letter-spacing:0.004px;">sr-only</span><span class="t mono" style="left:166.16px;top:94.00px;font-size:7.32px;color:#5b5b66;letter-spacing:0.002px;">"&gt;</span><span class="t mono" style="left:174.98px;top:94.00px;font-size:7.32px;color:#38383d;letter-spacing:0.005px;">Toggle navigation</span><span class="t mono" style="left:249.91px;top:94.00px;font-size:7.32px;color:#5b5b66;letter-spacing:0.002px;">&lt;/</span><span class="t mono" style="left:258.73px;top:94.00px;font-size:7.32px;color:#0074e8;letter-spacing:0.002px;">span</span><span class="t mono" style="left:276.36px;top:94.00px;font-size:7.32px;color:#5b5b66;">&gt;</span>
<div class="abs" style="left:0.00px;top:102.60px;width:813.00px;height:10.80px;background:#0074e8"></div>
<svg style="left:70.20px;top:105.90px" width="5.0" height="5.0" viewBox="0 0 5.0 5.0" fill="#fff"><path d="M0 1.2H5.0L2.50 4.2Z"/></svg>
<span class="t mono" style="left:78.00px;top:104.30px;font-size:7.32px;color:#fff;letter-spacing:0.005px;">&lt;span class="glyphicon glyphicon-menu-hamburger"&gt;</span>
<div class="abs" style="left:72.40px;top:113.60px;width:0.80px;height:19.00px;background:#c4c4cc"></div>
<span class="t mono" style="left:84.90px;top:114.50px;font-size:7.32px;color:#0074e8;letter-spacing:0.004px;">::before</span>
<span class="t mono" style="left:78.00px;top:126.00px;font-size:7.32px;color:#5b5b66;letter-spacing:0.002px;">&lt;/</span><span class="t mono" style="left:86.82px;top:126.00px;font-size:7.32px;color:#0074e8;letter-spacing:0.002px;">span</span><span class="t mono" style="left:104.45px;top:126.00px;font-size:7.32px;color:#5b5b66;">&gt;</span>
<span class="t mono" style="left:70.30px;top:135.60px;font-size:7.32px;color:#5b5b66;letter-spacing:0.002px;">&lt;/</span><span class="t mono" style="left:79.12px;top:135.60px;font-size:7.32px;color:#0074e8;letter-spacing:0.004px;">button</span><span class="t mono" style="left:105.56px;top:135.60px;font-size:7.32px;color:#5b5b66;">&gt;</span>
<span class="t mono" style="left:63.30px;top:147.00px;font-size:7.32px;color:#5b5b66;letter-spacing:0.002px;">&lt;/</span><span class="t mono" style="left:72.12px;top:147.00px;font-size:7.32px;color:#0074e8;letter-spacing:0.002px;">div</span><span class="t mono" style="left:85.34px;top:147.00px;font-size:7.32px;color:#5b5b66;">&gt;</span>
<span class="t mono" style="left:56.00px;top:158.00px;font-size:7.32px;color:#5b5b66;letter-spacing:0.002px;">&lt;/</span><span class="t mono" style="left:64.82px;top:158.00px;font-size:7.32px;color:#0074e8;letter-spacing:0.002px;">div</span><span class="t mono" style="left:78.04px;top:158.00px;font-size:7.32px;color:#5b5b66;">&gt;</span>
<span class="t mono" style="left:48.50px;top:168.00px;font-size:7.32px;color:#5b5b66;letter-spacing:0.002px;">&lt;/</span><span class="t mono" style="left:57.32px;top:168.00px;font-size:7.32px;color:#0074e8;letter-spacing:0.002px;">div</span><span class="t mono" style="left:70.54px;top:168.00px;font-size:7.32px;color:#5b5b66;">&gt;</span>
<div class="abs" style="left:0;top:176.2px;width:813px;height:3.4px;overflow:hidden"><span class="t mono" style="left:48.50px;top:1.60px;font-size:7.32px;color:#0074e8;letter-spacing:0.002px;">&lt;div</span></div>
<div class="abs" style="left:0.00px;top:179.60px;width:813.00px;height:18.00px;background:#fff;border-top:1px solid #e0e0e2"></div>
<svg style="left:4.80px;top:185.20px" width="4.60" height="8.00" viewBox="0 0 4.600 8" fill="none" stroke="#1c1b22" stroke-width="1.25" stroke-linejoin="round" stroke-linecap="round"><path d="M4 0.600L0.700 4L4 7.400"/></svg>
<div class="abs" style="left:13.20px;top:181.00px;width:0.80px;height:16.00px;background:#ededf0"></div>
<svg style="left:800.50px;top:185.00px" width="4.80" height="8.40" viewBox="0 0 4.800 8.400" fill="none" stroke="#4a4a52" stroke-width="1.20" stroke-linejoin="round" stroke-linecap="round"><path d="M0.700 0.600L4.100 4.200L0.700 7.800"/></svg>
<span class="t" style="left:14.50px;top:185.30px;font-size:7.60px;color:#8a8a94;letter-spacing:-0.533px;">anvas</span>
<span class="t" style="left:45.70px;top:185.30px;font-size:7.60px;color:#38383d;letter-spacing:-0.109px;">header</span>
<span class="t" style="left:68.70px;top:185.30px;font-size:7.60px;color:#8a8a94;letter-spacing:-0.097px;">#navbar.nav-bar.navbar-defaults</span>
<span class="t" style="left:188.20px;top:185.30px;font-size:7.60px;color:#38383d;letter-spacing:0.027px;">div</span>
<span class="t" style="left:198.00px;top:185.30px;font-size:7.60px;color:#8a8a94;letter-spacing:-0.128px;">.branding-header</span>
<span class="t" style="left:267.40px;top:185.30px;font-size:7.60px;color:#38383d;letter-spacing:0.027px;">div</span>
<span class="t" style="left:277.20px;top:185.30px;font-size:7.60px;color:#8a8a94;letter-spacing:-0.090px;">.l-container</span>
<span class="t" style="left:327.80px;top:185.30px;font-size:7.60px;color:#38383d;letter-spacing:0.027px;">div</span>
<span class="t" style="left:337.60px;top:185.30px;font-size:7.60px;color:#8a8a94;letter-spacing:-0.148px;">.branding-header__grid</span>
<span class="t" style="left:427.40px;top:185.30px;font-size:7.60px;color:#38383d;letter-spacing:0.027px;">div</span>
<span class="t" style="left:437.20px;top:185.30px;font-size:7.60px;color:#8a8a94;letter-spacing:-0.143px;">.mobile-menu</span>
<span class="t" style="left:495.00px;top:185.30px;font-size:7.60px;color:#38383d;letter-spacing:0.212px;">button</span>
<span class="t" style="left:517.40px;top:185.30px;font-size:7.60px;color:#8a8a94;letter-spacing:-0.090px;">.navbar-toggle.main-menu.collapsed</span>
<span class="t" style="left:650.90px;top:185.30px;font-size:7.60px;color:#0a6fe8;letter-spacing:-0.109px;">span.glyphicon.glyphicon-menu-hamburger</span>
<svg style="left:37.60px;top:187.00px" width="2.80" height="4.60" viewBox="0 0 2.800 4.600" fill="none" stroke="#6b6b76" stroke-width="0.90" stroke-linejoin="round" stroke-linecap="round"><path d="M0.500 0.500L2.300 2.300L0.500 4.100"/></svg>
<svg style="left:180.40px;top:187.00px" width="2.80" height="4.60" viewBox="0 0 2.800 4.600" fill="none" stroke="#6b6b76" stroke-width="0.90" stroke-linejoin="round" stroke-linecap="round"><path d="M0.500 0.500L2.300 2.300L0.500 4.100"/></svg>
<svg style="left:259.60px;top:187.00px" width="2.80" height="4.60" viewBox="0 0 2.800 4.600" fill="none" stroke="#6b6b76" stroke-width="0.90" stroke-linejoin="round" stroke-linecap="round"><path d="M0.500 0.500L2.300 2.300L0.500 4.100"/></svg>
<svg style="left:319.90px;top:187.00px" width="2.80" height="4.60" viewBox="0 0 2.800 4.600" fill="none" stroke="#6b6b76" stroke-width="0.90" stroke-linejoin="round" stroke-linecap="round"><path d="M0.500 0.500L2.300 2.300L0.500 4.100"/></svg>
<svg style="left:419.90px;top:187.00px" width="2.80" height="4.60" viewBox="0 0 2.800 4.600" fill="none" stroke="#6b6b76" stroke-width="0.90" stroke-linejoin="round" stroke-linecap="round"><path d="M0.500 0.500L2.300 2.300L0.500 4.100"/></svg>
<svg style="left:488.00px;top:187.00px" width="2.80" height="4.60" viewBox="0 0 2.800 4.600" fill="none" stroke="#6b6b76" stroke-width="0.90" stroke-linejoin="round" stroke-linecap="round"><path d="M0.500 0.500L2.300 2.300L0.500 4.100"/></svg>
<svg style="left:643.20px;top:187.00px" width="2.80" height="4.60" viewBox="0 0 2.800 4.600" fill="none" stroke="#6b6b76" stroke-width="0.90" stroke-linejoin="round" stroke-linecap="round"><path d="M0.500 0.500L2.300 2.300L0.500 4.100"/></svg>
<div class="abs" style="left:813.00px;top:19.30px;width:1.00px;height:178.00px;background:#e0e0e2"></div>
<div class="abs" style="left:810.00px;top:102.60px;width:3.00px;height:10.80px;background:#0074e8"></div>
<div class="abs" style="left:814.00px;top:20.00px;width:232.60px;height:16.20px;background:#fff;border-bottom:1px solid #e0e0e2"></div>
<svg style="left:819.20px;top:24.40px" width="6.40" height="6.60" viewBox="0 0 12.800 13.200" fill="none" stroke="#8f8f9d" stroke-width="1.50" stroke-linejoin="round" stroke-linecap="round"><path d="M1 1.200H11.800L7.800 6.400V11.600L5 10V6.400Z"/></svg>
<span class="t" style="left:828.60px;top:24.30px;font-size:7.90px;color:#8f8f9d;letter-spacing:-0.225px;">Filter Styles</span>
<span class="t" style="left:934.80px;top:24.30px;font-size:7.40px;color:#1c1b22;font-weight:bold;letter-spacing:-0.352px;">:hov</span>
<span class="t" style="left:955.30px;top:24.30px;font-size:7.40px;color:#1c1b22;font-weight:bold;letter-spacing:-0.332px;">.cls</span>
<svg style="left:975.60px;top:24.00px" width="7.60" height="7.60" viewBox="0 0 8 8" fill="none" stroke="#1c1b22" stroke-width="1.00" stroke-linejoin="round" stroke-linecap="round"><path d="M4 0.400V7.600M0.400 4H7.600"/></svg>
<svg style="left:992.80px;top:22.50px" width="10.400" height="10.400" viewBox="-10 -10 20 20"><circle r="4.200" fill="#1c1b22"/><path d="M5.40 0.00L8.80 0.00M3.82 3.82L6.22 6.22M0.00 5.40L0.00 8.80M-3.82 3.82L-6.22 6.22M-5.40 0.00L-8.80 0.00M-3.82 -3.82L-6.22 -6.22M-0.00 -5.40L-0.00 -8.80M3.82 -3.82L6.22 -6.22" stroke="#1c1b22" stroke-width="2" stroke-linecap="round"/></svg>
<svg style="left:1011.80px;top:22.90px" width="9.600" height="9.600" viewBox="-10 -10 20 20"><circle r="8.400" fill="none" stroke="#1c1b22" stroke-width="2.600"/><path d="M0 -8A8 8 0 0 1 0 8A3.400 8 0 0 1 0 -8Z" fill="#1c1b22"/></svg>
<svg style="left:1031.20px;top:22.90px" width="8.00" height="9.60" viewBox="0 0 16 19.200" fill="none" stroke="#1c1b22" stroke-width="2.40" stroke-linejoin="round" stroke-linecap="round"><path d="M3.200 1.200H10L14.800 6V16A2 2 0 0 1 12.800 18H3.200A2 2 0 0 1 1.200 16V3.200A2 2 0 0 1 3.200 1.200Z"/><path d="M7.500 7.500H11V14H7.500Z" fill="#8f8f9d" stroke="none"/></svg>
<div class="abs" style="left:814.00px;top:36.00px;width:232.60px;height:160.00px;background:#fff"></div>
<div class="abs" style="left:814.00px;top:36.00px;width:232.60px;height:16.20px;background:#f9f9fa;border-bottom:1px solid #e6e6ea"></div>
<svg style="left:818.80px;top:41.20px" width="4.8" height="4.8" viewBox="0 0 4.8 4.8" fill="#6b6b76"><path d="M1.2 0V4.8L4.0 2.40Z"/></svg>
<span class="t" style="left:826.90px;top:40.30px;font-size:7.90px;color:#38383d;letter-spacing:0.032px;">Pseudo-elements</span>
<div class="abs" style="left:814.00px;top:52.20px;width:232.60px;height:16.20px;background:#f9f9fa;border-bottom:1px solid #e6e6ea"></div>
<span class="t" style="left:816.40px;top:55.90px;font-size:7.90px;color:#38383d;letter-spacing:-0.046px;">This Element</span>
<span class="t mono" style="left:816.20px;top:71.20px;font-size:7.32px;color:#4a4a52;letter-spacing:0.004px;font-style:italic;">element</span>
<svg style="left:852.00px;top:71.20px" width="6.600" height="6.600" viewBox="0 0 6.600 6.600" fill="#6b6b76"><rect x="0.3" y="0.3" width="1.100" height="1.100"/><rect x="0.3" y="2.9" width="1.100" height="1.100"/><rect x="0.3" y="5.5" width="1.100" height="1.100"/><rect x="2.9" y="0.3" width="1.100" height="1.100"/><rect x="2.9" y="5.5" width="1.100" height="1.100"/><rect x="5.5" y="0.3" width="1.100" height="1.100"/><rect x="5.5" y="2.9" width="1.100" height="1.100"/><rect x="5.5" y="5.5" width="1.100" height="1.100"/></svg>
<span class="t mono" style="left:864.60px;top:71.20px;font-size:7.32px;color:#4a4a52;">{</span>
<span class="t mono" style="left:816.20px;top:80.60px;font-size:7.32px;color:#4a4a52;">}</span>
<div class="abs" style="left:814.00px;top:89.40px;width:232.60px;height:0.80px;background:#e6e6ea"></div>
<span class="t mono" style="left:819.60px;top:92.80px;font-size:7.32px;color:#0060df;">…</span>
<span class="t mono" style="left:823.40px;top:92.80px;font-size:7.32px;color:#0060df;letter-spacing:0.006px;text-decoration:underline;text-decoration-thickness:0.700px;text-underline-offset:0.800px;">_l7Q0eWJ9xiUJkiVLCGijQxTgB75iKO0pgZF9m-_O-qI.css:5</span>
<span class="t mono" style="left:816.90px;top:103.00px;font-size:7.32px;color:#38383d;letter-spacing:0.005px;">.mobile-menu .main-menu .glyphicon</span>
<svg style="left:971.00px;top:103.30px" width="6.600" height="6.600" viewBox="0 0 6.600 6.600" fill="#6b6b76"><rect x="0.3" y="0.3" width="1.100" height="1.100"/><rect x="0.3" y="2.9" width="1.100" height="1.100"/><rect x="0.3" y="5.5" width="1.100" height="1.100"/><rect x="2.9" y="0.3" width="1.100" height="1.100"/><rect x="2.9" y="5.5" width="1.100" height="1.100"/><rect x="5.5" y="0.3" width="1.100" height="1.100"/><rect x="5.5" y="2.9" width="1.100" height="1.100"/><rect x="5.5" y="5.5" width="1.100" height="1.100"/></svg>
<span class="t mono" style="left:984.60px;top:103.00px;font-size:7.32px;color:#4a4a52;">{</span>
<span class="t mono" style="left:834.40px;top:114.00px;font-size:7.32px;color:#0074e8;letter-spacing:0.005px;">color</span>
<span class="t mono" style="left:856.44px;top:114.00px;font-size:7.32px;color:#4a4a52;">:</span>
<div class="abs" style="left:864.30px;top:112.60px;width:8.40px;height:8.40px;border-radius:50%;background:#fff;border:0.7px solid #9a9aa2"></div>
<span class="t mono" style="left:875.60px;top:114.00px;font-size:7.32px;color:#dd00a9;letter-spacing:0.002px;">var(</span>
<span class="t mono" style="left:893.23px;top:114.00px;font-size:7.32px;color:#0074e8;letter-spacing:0.004px;">--white</span>
<svg style="left:927.60px;top:115.20px" width="9.00" height="5.40" viewBox="0 0 18 10.800" fill="none" stroke="#38383d" stroke-width="1.50" stroke-linejoin="round" stroke-linecap="round"><path d="M1 10V5A2 2 0 0 1 3 3H7.500M5.500 0.800L8 3L5.500 5.200" stroke-width="1.500"/><path d="M11 1.500H17M11 4.500H17M11 7.500H17" stroke-width="1.600"/></svg>
<span class="t mono" style="left:939.80px;top:114.00px;font-size:7.32px;color:#dd00a9;">)</span>
<span class="t mono" style="left:944.21px;top:114.00px;font-size:7.32px;color:#4a4a52;">;</span>
<span class="t mono" style="left:816.90px;top:124.30px;font-size:7.32px;color:#4a4a52;">}</span>
<div class="abs" style="left:814.00px;top:132.90px;width:232.60px;height:0.80px;background:#e6e6ea"></div>
<span class="t mono" style="left:819.20px;top:136.80px;font-size:7.32px;color:#0060df;">…</span>
<span class="t mono" style="left:823.40px;top:136.80px;font-size:7.32px;color:#0060df;letter-spacing:0.006px;text-decoration:underline;text-decoration-thickness:0.700px;text-underline-offset:0.800px;">_ff3JfJKWiRqoymrZlSaZFzIxRJfPCa76FLBztP53g3k.css:2</span>
<div class="abs" style="left:816.00px;top:146.20px;width:167.40px;height:8.90px;background:#0a6fe8"></div>
<span class="t mono" style="left:816.40px;top:146.80px;font-size:7.32px;color:#fff;letter-spacing:0.005px;">@media screen and (max-width: 767px) {</span>
<div class="abs" style="left:816.00px;top:155.00px;width:154.40px;height:8.90px;background:#0a6fe8"></div>
<span class="t mono" style="left:820.81px;top:156.00px;font-size:7.32px;color:#fff;letter-spacing:0.005px;">.mobile-menu .main-menu .glyphicon</span>
<svg style="left:973.40px;top:156.20px" width="6.600" height="6.600" viewBox="0 0 6.600 6.600" fill="#6b6b76"><rect x="0.3" y="0.3" width="1.100" height="1.100"/><rect x="0.3" y="2.9" width="1.100" height="1.100"/><rect x="0.3" y="5.5" width="1.100" height="1.100"/><rect x="2.9" y="0.3" width="1.100" height="1.100"/><rect x="2.9" y="5.5" width="1.100" height="1.100"/><rect x="5.5" y="0.3" width="1.100" height="1.100"/><rect x="5.5" y="2.9" width="1.100" height="1.100"/><rect x="5.5" y="5.5" width="1.100" height="1.100"/></svg>
<div class="abs" style="left:983.40px;top:155.00px;width:9.40px;height:8.90px;background:#0a6fe8"></div>
<span class="t mono" style="left:987.37px;top:156.00px;font-size:7.32px;color:#fff;">{</span>
<div class="abs" style="left:816.40px;top:165.00px;width:1.60px;height:10.30px;background:#12a505"></div>
<div class="abs" style="left:833.80px;top:165.90px;width:53.10px;height:8.90px;background:#0a6fe8"></div>
<span class="t mono" style="left:834.40px;top:166.20px;font-size:7.32px;color:#fff;letter-spacing:0.004px;">background: </span>
<svg style="left:887.20px;top:168.20px" width="4.4" height="4.4" viewBox="0 0 4.4 4.4" fill="#6b6b76"><path d="M1.2 0V4.4L3.6 2.20Z"/></svg>
<svg style="left:892.2px;top:166.60px" width="7.400" height="7.400" viewBox="-10 -10 20 20"><circle r="9.400" fill="#e8e8ec" stroke="#9a9aa2" stroke-width="1.200"/><path d="M0 0V-9.400A9.400 9.400 0 0 0 -9.400 0ZM0 0V9.400A9.400 9.400 0 0 0 9.400 0Z" fill="#c2c2c8"/></svg>
<div class="abs" style="left:903.20px;top:165.90px;width:44.10px;height:8.90px;background:#0a6fe8"></div>
<span class="t mono" style="left:903.50px;top:166.20px;font-size:7.32px;color:#fff;letter-spacing:0.005px;">#68758200;</span>
<div class="abs" style="left:816.00px;top:174.80px;width:8.60px;height:8.90px;background:#0a6fe8"></div>
<span class="t mono" style="left:820.81px;top:175.60px;font-size:7.32px;color:#fff;">}</span>
<div class="abs" style="left:816.00px;top:183.70px;width:4.40px;height:8.80px;background:#0a6fe8"></div>
<span class="t mono" style="left:816.20px;top:184.40px;font-size:7.32px;color:#fff;">}</span>
<div class="abs" style="left:0.00px;top:196.60px;width:1280.00px;height:1.20px;background:#dcdce0"></div>
<div class="abs" style="left:813.00px;top:192.60px;width:1.00px;height:4.00px;background:#e0e0e2"></div>
<div class="abs" style="left:1046.60px;top:19.30px;width:1.00px;height:178.00px;background:#e0e0e2"></div>
<div class="abs" style="left:1047.60px;top:20.00px;width:232.40px;height:16.20px;background:#f9f9fa;border-bottom:1px solid #e0e0e2"></div>
<svg style="left:1051.25px;top:24.20px" width="9.40" height="7.60" viewBox="0 0 18.800 15.200" fill="none" stroke="#38383d" stroke-width="1.60" stroke-linejoin="round" stroke-linecap="round"><rect x="0.900" y="0.900" width="17" height="13.400" rx="1.600"/><path d="M12.200 1V14" /><path d="M5 4.800L8.600 7.600L5 10.400Z" fill="#38383d" stroke-width="0.800"/></svg>
<span class="t" style="left:1072.80px;top:24.20px;font-size:7.90px;color:#38383d;letter-spacing:0.049px;">Layout</span>
<span class="t" style="left:1111.80px;top:24.20px;font-size:7.90px;color:#38383d;letter-spacing:0.137px;">Computed</span>
<span class="t" style="left:1164.30px;top:24.20px;font-size:7.90px;color:#38383d;letter-spacing:-0.113px;">Changes</span>
<span class="t" style="left:1209.70px;top:24.20px;font-size:7.90px;color:#0a6fe8;letter-spacing:0.233px;">Compatibility</span>
<div class="abs" style="left:1202.20px;top:19.60px;width:62.80px;height:1.30px;background:#0a84ff"></div>
<div class="abs" style="left:1268.60px;top:20.00px;width:1.00px;height:15.50px;background:#e0e0e2"></div>
<svg style="left:1272.60px;top:26.00px" width="4.8" height="4.8" viewBox="0 0 4.8 4.8" fill="#38383d"><path d="M0 1.2H4.8L2.40 4.0Z"/></svg>
<div class="abs" style="left:1047.60px;top:36.00px;width:232.40px;height:160.60px;background:#fff"></div>
<div class="abs" style="left:1047.60px;top:36.00px;width:232.40px;height:16.30px;background:#f9f9fa;border-bottom:1px solid #e0e0e2"></div>
<svg style="left:1051.50px;top:42.10px" width="5.4" height="5.4" viewBox="0 0 5.4 5.4" fill="#77777f"><path d="M0 1.2H5.4L2.70 4.6Z"/></svg>
<span class="t" style="left:1060.00px;top:39.80px;font-size:8.30px;color:#38383d;letter-spacing:-0.158px;">Selected Element</span>
<svg style="left:1053.20px;top:59.30px" width="7.400" height="7.400" viewBox="-10 -10 20 20"><circle r="8.800" fill="none" stroke="#38383d" stroke-width="1.900"/><path d="M0 -1.500V5" stroke="#38383d" stroke-width="2.600"/><circle cy="-4.800" r="1.500" fill="#38383d"/></svg>
<span class="t mono" style="left:1065.90px;top:59.25px;font-size:7.32px;color:#0060df;letter-spacing:0.005px;text-decoration:underline;text-decoration-thickness:0.700px;text-underline-offset:0.800px;">font-smooth</span>
<div class="abs" style="left:1116.50px;top:58.80px;width:9.40px;height:9.00px;border:0.8px solid #4a4a52;border-radius:1px;background:#fff"></div><span class="t" style="left:1118.50px;top:60.80px;font-size:6.40px;color:#38383d;font-style:italic;">M</span>
<div class="abs" style="left:1261.20px;top:69.60px;width:12.60px;height:6.50px;background:#d7002f;border-radius:1.200px"></div><span class="t" style="left:1262.50px;top:70.20px;font-size:6.00px;color:#fff;font-weight:bold;letter-spacing:0.061px;">144</span>
<svg style="left:1260.80px;top:57.20px" width="11.2" height="11.2" viewBox="-10 -10 20 20" fill="none" stroke="#77777c" stroke-width="5.600"><path d="M-6.500 4A7 7 0 0 1 2.500 -6.600"/><path d="M7 -1.500A7 7 0 0 1 -3 6.800" stroke="#8a8a90"/><path d="M1.500 -10L8.500 -5.500L1.500 -1Z" fill="#77777c" stroke="none"/></svg><div class="abs" style="left:1269.80px;top:62.40px;width:3.80px;height:6.80px;background:#fff;border:0.8px solid #6b6b70;border-radius:0.800px"></div>
<span class="t" style="left:1070.60px;top:77.25px;font-size:7.30px;color:#5b5b66;letter-spacing:0.172px;">-webkit-font-smoothing</span>
<span class="t" style="left:1070.60px;top:85.50px;font-size:7.30px;color:#5b5b66;letter-spacing:0.078px;">-moz-osx-font-smoothing</span>
<div class="abs" style="left:1047.60px;top:101.20px;width:232.40px;height:16.30px;background:#f9f9fa;border-bottom:1px solid #e0e0e2;border-top:1px solid #e0e0e2"></div>
<svg style="left:1051.50px;top:107.30px" width="5.4" height="5.4" viewBox="0 0 5.4 5.4" fill="#77777f"><path d="M0 1.2H5.4L2.70 4.6Z"/></svg>
<span class="t" style="left:1060.00px;top:104.80px;font-size:8.30px;color:#38383d;letter-spacing:-0.302px;">All Issues</span>
<svg style="left:1053.20px;top:124.70px" width="7.400" height="7.400" viewBox="-10 -10 20 20"><circle r="8.800" fill="none" stroke="#38383d" stroke-width="1.900"/><path d="M0 -1.500V5" stroke="#38383d" stroke-width="2.600"/><circle cy="-4.800" r="1.500" fill="#38383d"/></svg>
<span class="t mono" style="left:1065.70px;top:124.60px;font-size:7.32px;color:#0060df;letter-spacing:0.005px;text-decoration:underline;text-decoration-thickness:0.700px;text-underline-offset:0.800px;">scrollbar-color</span>
<div class="abs" style="left:1134.30px;top:123.80px;width:9.40px;height:9.00px;border:0.8px solid #4a4a52;border-radius:1px;background:#fff"></div><span class="t" style="left:1136.30px;top:125.80px;font-size:6.40px;color:#38383d;font-style:italic;">M</span>
<div class="abs" style="left:1240.25px;top:135.00px;width:13.80px;height:6.50px;background:#d7002f;border-radius:1.200px"></div><span class="t" style="left:1241.55px;top:135.60px;font-size:6.00px;color:#fff;font-weight:bold;letter-spacing:-0.072px;">26.1</span>
<div class="abs" style="left:1260.00px;top:135.00px;width:13.80px;height:6.50px;background:#d7002f;border-radius:1.200px"></div><span class="t" style="left:1261.30px;top:135.60px;font-size:6.00px;color:#fff;font-weight:bold;letter-spacing:-0.072px;">26.1</span>
<svg style="left:1242.20px;top:123.60px" width="10.0" height="10.0" viewBox="-10 -10 20 20"><circle r="10" fill="#9a9a9e"/><circle r="7.600" fill="#858589"/><path d="M-4.600 4.600L-1.300 -1.300L4.600 -4.600L1.300 1.300Z" fill="#e4e4e6"/></svg>
<svg style="left:1261.60px;top:123.60px" width="10.0" height="10.0" viewBox="-10 -10 20 20"><circle r="10" fill="#9a9a9e"/><circle r="7.600" fill="#858589"/><path d="M-4.600 4.600L-1.300 -1.300L4.600 -4.600L1.300 1.300Z" fill="#e4e4e6"/></svg><div class="abs" style="left:1270.20px;top:128.20px;width:3.80px;height:6.80px;background:#fff;border:0.8px solid #6b6b70;border-radius:0.800px"></div>
<svg style="left:1066.00px;top:145.10px" width="3.8" height="3.8" viewBox="0 0 3.8 3.8" fill="#38383d"><path d="M0 1.2H3.8L1.90 3.0Z"/></svg>
<span class="t" style="left:1072.25px;top:143.00px;font-size:7.40px;color:#6b6b76;letter-spacing:-0.111px;">1 occurrence</span>
<span class="t" style="left:1070.90px;top:153.20px;font-size:7.40px;color:#0074e8;letter-spacing:0.183px;">html</span>
<span class="t" style="left:1085.60px;top:153.20px;font-size:7.40px;color:#dd00a9;letter-spacing:0.023px;">.no-touchevents.js</span>
<div class="abs" style="left:1047.60px;top:165.80px;width:232.40px;height:0.80px;background:#e6e6ea"></div>
<div class="abs" style="left:0;top:166.6px;width:1280px;height:12.6px;overflow:hidden"><div class="abs" style="left:0;top:-166.6px"><svg style="left:1053.20px;top:172.90px" width="7.400" height="7.400" viewBox="-10 -10 20 20"><circle r="8.800" fill="none" stroke="#38383d" stroke-width="1.900"/><path d="M0 -1.500V5" stroke="#38383d" stroke-width="2.600"/><circle cy="-4.800" r="1.500" fill="#38383d"/></svg><span class="t mono" style="left:1065.70px;top:172.60px;font-size:7.32px;color:#0060df;letter-spacing:0.005px;text-decoration:underline;text-decoration-thickness:0.700px;text-underline-offset:0.800px;">-webkit-tap-highlight-color</span><div class="abs" style="left:1187.50px;top:171.80px;width:9.40px;height:9.00px;border:0.8px solid #4a4a52;border-radius:1px;background:#fff"></div><span class="t" style="left:1189.50px;top:173.80px;font-size:6.40px;color:#38383d;font-style:italic;">M</span><svg style="left:1224.80px;top:172.00px" width="9.2" height="9.2" viewBox="-10 -10 20 20" fill="none" stroke="#77777c" stroke-width="5.600"><path d="M-6.500 4A7 7 0 0 1 2.500 -6.600"/><path d="M7 -1.500A7 7 0 0 1 -3 6.800" stroke="#8a8a90"/><path d="M1.500 -10L8.500 -5.500L1.500 -1Z" fill="#77777c" stroke="none"/></svg><svg style="left:1243.40px;top:172.00px" width="9.2" height="9.2" viewBox="-10 -10 20 20" fill="none" stroke="#77777c" stroke-width="5.600"><path d="M-6.500 4A7 7 0 0 1 2.500 -6.600"/><path d="M7 -1.500A7 7 0 0 1 -3 6.800" stroke="#8a8a90"/><path d="M1.500 -10L8.500 -5.500L1.500 -1Z" fill="#77777c" stroke="none"/></svg><div class="abs" style="left:1251.40px;top:176.20px;width:3.80px;height:6.80px;background:#fff;border:0.8px solid #6b6b70;border-radius:0.800px"></div><svg style="left:1262.00px;top:171.60px" width="10.0" height="10.0" viewBox="-10 -10 20 20"><circle r="10" fill="#9a9a9e"/><circle r="7.600" fill="#858589"/><path d="M-4.600 4.600L-1.300 -1.300L4.600 -4.600L1.300 1.300Z" fill="#e4e4e6"/></svg></div></div>
<div class="abs" style="left:1047.60px;top:179.20px;width:232.40px;height:17.40px;background:#fff;border-top:1px solid #e0e0e2"></div>
<svg style="left:1141.90px;top:183.60px" width="10.00" height="10.00" viewBox="-10 -10 20 20" fill="none" stroke="#1c1b22"><circle cx="0" cy="0" r="4.600" stroke-width="2.200"/><path d="M6.20 0.00L9.30 0.00M4.38 4.38L6.58 6.58M0.00 6.20L0.00 9.30M-4.38 4.38L-6.58 6.58M-6.20 0.00L-9.30 0.00M-4.38 -4.38L-6.58 -6.58M-0.00 -6.20L-0.00 -9.30M4.38 -4.38L6.58 -6.58" stroke-width="2.600" stroke-linecap="butt"/></svg>
<span class="t" style="left:1155.30px;top:184.80px;font-size:8.00px;color:#38383d;letter-spacing:0.062px;">Settings</span>
<div class="abs" style="left:0.00px;top:197.80px;width:1280.00px;height:19.40px;background:#fff"></div>
<svg style="left:6.75px;top:203.00px" width="8.40" height="10.00" viewBox="0 0 16.800 20" fill="none" stroke="#1c1b22" stroke-width="1.90" stroke-linejoin="round" stroke-linecap="round"><path d="M1 4.200H15.800M5.600 4V2A1 1 0 0 1 6.600 1H10.200A1 1 0 0 1 11.200 2V4"/><path d="M2.600 4.500L3.400 17A2 2 0 0 0 5.400 19H11.400A2 2 0 0 0 13.400 17L14.200 4.500Z" fill="#38383d"/><path d="M6.400 8V15.500M10.400 8V15.500" stroke="#fff" stroke-width="1.300"/></svg>
<div class="abs" style="left:21.20px;top:201.00px;width:1.00px;height:13.00px;background:#e0e0e2"></div>
<svg style="left:29.25px;top:204.60px" width="6.40" height="6.60" viewBox="0 0 12.800 13.200" fill="none" stroke="#8f8f9d" stroke-width="1.50" stroke-linejoin="round" stroke-linecap="round"><path d="M1 1.200H11.800L7.800 6.400V11.600L5 10V6.400Z"/></svg>
<span class="t" style="left:38.75px;top:204.20px;font-size:7.90px;color:#8f8f9d;letter-spacing:-0.071px;">Filter Output</span>
<div class="abs" style="left:998.60px;top:201.50px;width:1.00px;height:12.00px;background:#e0e0e2"></div>
<div class="abs" style="left:1002.50px;top:201.25px;width:26.75px;height:12.50px;background:#e6f0fd;border-bottom:1.100px solid #0a74e8;border-radius:1.500px"></div>
<span class="t" style="left:1006.25px;top:204.50px;font-size:7.80px;color:#0060df;letter-spacing:-0.289px;">Errors</span>
<div class="abs" style="left:1031.75px;top:201.25px;width:37.75px;height:12.50px;background:#e6f0fd;border-bottom:1.100px solid #0a74e8;border-radius:1.500px"></div>
<span class="t" style="left:1035.50px;top:204.50px;font-size:7.80px;color:#0060df;letter-spacing:-0.238px;">Warnings</span>
<div class="abs" style="left:1071.75px;top:201.25px;width:20.00px;height:12.50px;background:#e6f0fd;border-bottom:1.100px solid #0a74e8;border-radius:1.500px"></div>
<span class="t" style="left:1075.50px;top:204.50px;font-size:7.80px;color:#0060df;letter-spacing:-0.066px;">Info</span>
<div class="abs" style="left:1094.25px;top:201.25px;width:22.75px;height:12.50px;background:#e6f0fd;border-bottom:1.100px solid #0a74e8;border-radius:1.500px"></div>
<span class="t" style="left:1097.75px;top:204.50px;font-size:7.80px;color:#0060df;letter-spacing:-0.355px;">Logs</span>
<div class="abs" style="left:1119.25px;top:201.25px;width:29.00px;height:12.50px;background:#e6f0fd;border-bottom:1.100px solid #0a74e8;border-radius:1.500px"></div>
<span class="t" style="left:1122.75px;top:204.50px;font-size:7.80px;color:#0060df;letter-spacing:-0.247px;">Debug</span>
<div class="abs" style="left:1157.50px;top:201.25px;width:19.25px;height:12.50px;background:#e6f0fd;border-bottom:1.100px solid #0a74e8;border-radius:1.500px"></div>
<span class="t" style="left:1161.25px;top:204.50px;font-size:7.80px;color:#0060df;letter-spacing:-1.349px;">CSS</span>
<div class="abs" style="left:1179.25px;top:201.25px;width:21.25px;height:12.50px;background:#e6f0fd;border-bottom:1.100px solid #0a74e8;border-radius:1.500px"></div>
<span class="t" style="left:1182.75px;top:204.50px;font-size:7.80px;color:#0060df;letter-spacing:-0.823px;">XHR</span>
<div class="abs" style="left:1203.00px;top:201.25px;width:37.50px;height:12.50px;background:#e6f0fd;border-bottom:1.100px solid #0a74e8;border-radius:1.500px"></div>
<span class="t" style="left:1206.75px;top:204.50px;font-size:7.80px;color:#0060df;letter-spacing:-0.369px;">Requests</span>
<div class="abs" style="left:1153.00px;top:201.50px;width:1.00px;height:12.00px;background:#e0e0e2"></div>
<div class="abs" style="left:1242.50px;top:201.50px;width:1.00px;height:12.00px;background:#e0e0e2"></div>
<svg style="left:1246.55px;top:202.80px" width="10.40" height="10.40" viewBox="-10 -10 20 20" fill="none" stroke="#1c1b22"><circle cx="0" cy="0" r="4.600" stroke-width="2.200"/><path d="M6.20 0.00L9.30 0.00M4.38 4.38L6.58 6.58M0.00 6.20L0.00 9.30M-4.38 4.38L-6.58 6.58M-6.20 0.00L-9.30 0.00M-4.38 -4.38L-6.58 -6.58M-0.00 -6.20L-0.00 -9.30M4.38 -4.38L6.58 -6.58" stroke-width="2.600" stroke-linecap="butt"/></svg>
<svg style="left:1267.50px;top:204.30px" width="7.40" height="7.40" viewBox="0 0 8 8" fill="none" stroke="#1c1b22" stroke-width="1.15" stroke-linejoin="round" stroke-linecap="round"><path d="M0.600 0.600L7.400 7.400M7.400 0.600L0.600 7.400"/></svg>
<div class="abs" style="left:0.00px;top:217.20px;width:1280.00px;height:13.90px;background:#fffbd6;border-top:0.800px solid #f3ecb6;border-bottom:0.800px solid #f0e8b0"></div>
<svg style="left:6.1px;top:220.20px" width="7.800" height="7.400" viewBox="0 0 15.600 14.800"><path d="M7.800 0.800L15 13.800H0.600Z" fill="#d7a600" stroke="#d7a600" stroke-width="1.200" stroke-linejoin="round"/><path d="M7.800 5V9.400" stroke="#3a2e00" stroke-width="1.800" stroke-linecap="round"/><circle cx="7.800" cy="11.800" r="1" fill="#3a2e00"/></svg>
<svg style="left:17.80px;top:221.60px" width="5.6" height="5.6" viewBox="0 0 5.6 5.6" fill="#737380"><path d="M1.2 0V5.6L4.8 2.80Z"/></svg>
<span class="t mono" style="left:25.75px;top:221.00px;font-size:7.32px;color:#715100;letter-spacing:0.005px;white-space:pre;">Expected color but found ‘-webkit-focus-ring-color’.  Error in parsing value for ‘outline-color’.  Declaration dropped.</span>
<span class="t mono" style="left:1007.32px;top:221.00px;font-size:7.32px;color:#0040c0;letter-spacing:0.005px;text-decoration:underline;text-decoration-thickness:0.700px;text-underline-offset:0.800px;">css_ff3JfJKWiRqoymrZlSaZFzIxRJfPCa76FLBztP53g3k.css:2:122996</span>
<div class="abs" style="left:0.00px;top:231.10px;width:1280.00px;height:16.40px;background:#fff"></div>
</div>
<div id="taskbar" class="abs">
<svg style="left:3.40px;top:3.10px" width="21.60" height="21.60" viewBox="-10.800 -10.800 21.600 21.600" ><circle r="10" fill="none" stroke="#fff" stroke-width="1.300"/><path d="M-5.600 -4.600V2.200A2.600 2.600 0 0 0 -3 4.800H3.400A2.600 2.600 0 0 0 6 2.200V-1.800M-1.800 1.600V-2A1.900 1.900 0 0 1 2 -2V1.600M2 -2A1.900 1.900 0 0 1 5.900 -2" fill="none" stroke="#fff" stroke-width="1.500" stroke-linecap="round" stroke-linejoin="round"/></svg>
<div class="abs" style="left:33.20px;top:2.50px;width:1.00px;height:23.00px;background:#222"></div>
<div class="abs" style="left:39.20px;top:0.50px;width:25.50px;height:25.60px;background:#4b4b4b"></div>
<div class="abs" style="left:39.20px;top:26.00px;width:25.50px;height:1.50px;background:#38b261"></div>
<div class="abs" style="left:42.40px;top:3.90px;width:19.50px;height:19.10px;background:#f4702e;border-radius:4px"></div>
<svg style="left:45.20px;top:6.70px" width="14.00" height="14.00" viewBox="-10 -10 20 20" ><path d="M2.800 -8.400A8.600 8.600 0 1 1 -7.800 -3.200C-6 -6 -3.500 -5 -2.200 -3.200A3.600 3.600 0 1 0 3.400 -1.200C2.200 -3.500 2.800 -6.500 2.800 -8.400Z" fill="#fff"/><path d="M1.500 -9.500L7.500 -6L2.200 -3Z" fill="#fff"/><circle cx="0.200" cy="0.800" r="2.500" fill="#f4702e"/></svg>
<div class="abs" style="left:40.00px;top:0.80px;width:10.60px;height:10.60px;background:#35a854;border-radius:50%"></div>
<span class="t" style="left:43.40px;top:3.50px;font-size:7.60px;color:#e8fff0;font-weight:bold;">2</span>
<div class="abs" style="left:70.30px;top:4.50px;width:9.00px;height:4.00px;background:#3aa655;border-radius:1.500px 1.500px 0 0"></div>
<div class="abs" style="left:70.30px;top:6.10px;width:18.90px;height:15.30px;background:#3aa655;border-radius:1.500px"></div>
<div class="abs" style="left:71.60px;top:8.10px;width:16.40px;height:2.00px;background:#f0fff4"></div>
<div class="abs" style="left:70.30px;top:9.10px;width:18.90px;height:12.30px;background:#53bf6e;border-radius:0 0 1.500px 1.500px"></div>
<div class="abs" style="left:98.40px;top:3.60px;width:18.90px;height:19.40px;background:linear-gradient(#2e2e2e,#202020);border:0.800px solid #141414;border-radius:3.400px"></div>
<span class="t mono" style="left:101.00px;top:7.10px;font-size:5.60px;color:#fff;font-weight:bold;">$</span>
<div class="abs" style="left:105.00px;top:10.50px;width:3.60px;height:0.90px;background:#fff"></div>
<div class="abs" style="left:127.10px;top:4.50px;width:17.80px;height:17.80px;background:#fafafa;border-radius:1.800px;border-bottom:1px solid #d8d8d8"></div>
<svg style="left:130.60px;top:7.90px" width="10.80" height="10.80" viewBox="-10 -10 20 20" fill="none" stroke="#2f3f5c"><circle cx="0" cy="0" r="5.200" stroke-width="3.600"/><path d="M6.40 0.00L9.20 0.00M4.53 4.53L6.51 6.51M0.00 6.40L0.00 9.20M-4.53 4.53L-6.51 6.51M-6.40 0.00L-9.20 0.00M-4.53 -4.53L-6.51 -6.51M-0.00 -6.40L-0.00 -9.20M4.53 -4.53L6.51 -6.51" stroke-width="3.400" stroke-linecap="butt"/></svg>
<div class="abs" style="left:154.50px;top:3.60px;width:19.20px;height:19.40px;background:linear-gradient(#47ad30,#388f26);border-radius:4.200px"></div>
<svg style="left:157.40px;top:6.50px" width="13.40" height="13.80" viewBox="0 0 26.800 27.600" ><path d="M13.400 1.500C16.500 3.800 20.500 5 25 5.200C24.800 14 21.500 21.500 13.400 26C5.300 21.500 2 14 1.800 5.200C6.300 5 10.300 3.800 13.400 1.500Z" fill="none" stroke="#fff" stroke-width="2.200" stroke-linejoin="round"/><path d="M13.400 6.400C15.400 7.800 18 8.600 20.600 8.800C20.400 14.200 18.400 18.600 13.400 21.400C8.400 18.600 6.400 14.200 6.200 8.800C8.800 8.600 11.400 7.800 13.400 6.400Z" fill="#eef3ee"/></svg>
<div class="abs" style="left:151.20px;top:26.00px;width:25.50px;height:1.50px;background:#38b261"></div>
<div class="abs" style="left:182.90px;top:3.90px;width:18.50px;height:19.10px;background:#ececec;border-radius:1.800px 1.800px 6px 1.800px;border:0.600px solid #fff"></div>
<svg style="left:185.00px;top:6.70px" width="14.40" height="13.60" viewBox="0 0 28.800 27.200" ><path d="M0.600 2.800A2.200 2.200 0 0 1 2.800 0.600H7.400V27H5.200A4.600 4.600 0 0 1 0.600 22.400Z" fill="#f0413d"/><path d="M9.600 0.600H28.200C27.800 4.800 25 7 21.600 7H9.600Z" fill="#f0413d"/><path d="M10.600 10.400L22.400 15.800L10.600 21.200Z" fill="#1c9be6"/></svg>
<div class="abs" style="left:179.20px;top:26.00px;width:25.30px;height:1.50px;background:#38b261"></div>
<span class="t" style="left:703.60px;top:9.60px;font-size:8.30px;color:#fff;letter-spacing:0.153px;">87.0 °</span>
<div class="abs" style="left:736.90px;top:0.70px;width:26.90px;height:26.80px;background:#3e3e3e;border-right:0.600px solid #353535"></div>
<span class="t" style="left:742.00px;top:4.10px;font-size:8.00px;color:#dcdcdc;letter-spacing:-0.164px;">CPU</span>
<div class="abs" style="left:763.80px;top:0.70px;width:27.00px;height:26.80px;background:#3e3e3e;border-right:0.600px solid #353535"></div>
<span class="t" style="left:768.00px;top:4.10px;font-size:8.00px;color:#dcdcdc;letter-spacing:0.043px;">MEM</span>
<div class="abs" style="left:790.80px;top:0.70px;width:26.90px;height:26.80px;background:#3e3e3e;border-right:0.600px solid #353535"></div>
<span class="t" style="left:796.60px;top:4.10px;font-size:8.00px;color:#dcdcdc;letter-spacing:-0.233px;">NET</span>
<div class="abs" style="left:817.70px;top:0.70px;width:27.00px;height:26.80px;background:#3e3e3e;border-right:0.600px solid #353535"></div>
<span class="t" style="left:822.00px;top:4.10px;font-size:8.00px;color:#dcdcdc;letter-spacing:0.007px;">DISK</span>
<div class="abs" style="left:738.60px;top:24.90px;width:1.40px;height:1.20px;background:#fff"></div>
<div class="abs" style="left:740.00px;top:23.10px;width:1.60px;height:3.00px;background:#fff"></div>
<div class="abs" style="left:741.60px;top:19.10px;width:1.60px;height:7.00px;background:#fff"></div>
<div class="abs" style="left:743.20px;top:22.70px;width:1.40px;height:3.40px;background:#fff"></div>
<div class="abs" style="left:744.60px;top:23.70px;width:1.60px;height:2.40px;background:#fff"></div>
<div class="abs" style="left:746.20px;top:21.50px;width:1.60px;height:4.60px;background:#fff"></div>
<div class="abs" style="left:747.80px;top:23.10px;width:1.60px;height:3.00px;background:#fff"></div>
<div class="abs" style="left:749.40px;top:23.90px;width:1.60px;height:2.20px;background:#fff"></div>
<div class="abs" style="left:751.00px;top:22.30px;width:1.60px;height:3.80px;background:#fff"></div>
<div class="abs" style="left:752.60px;top:23.10px;width:1.60px;height:3.00px;background:#fff"></div>
<div class="abs" style="left:754.20px;top:23.70px;width:1.60px;height:2.40px;background:#fff"></div>
<div class="abs" style="left:755.80px;top:18.30px;width:1.80px;height:7.80px;background:#fff"></div>
<div class="abs" style="left:757.60px;top:22.10px;width:1.60px;height:4.00px;background:#fff"></div>
<div class="abs" style="left:759.20px;top:24.10px;width:1.60px;height:2.00px;background:#fff"></div>
<div class="abs" style="left:760.80px;top:24.90px;width:1.60px;height:1.20px;background:#fff"></div>
<div class="abs" style="left:738.40px;top:25.90px;width:24.00px;height:0.90px;background:#fff"></div>
<svg style="left:765.20px;top:3.90px" width="24.00" height="24.00" viewBox="-12 -12 24 24" ><circle r="12" fill="#8b8b8b"/><path d="M0 0L3.800 11.400A12 12 0 0 0 12 0Z" fill="#fff"/><path d="M0 0L3.800 11.400" stroke="#bdbdbd" stroke-width="0.600"/></svg>
<span class="t" style="left:768.00px;top:4.10px;font-size:8.00px;color:#e4e4e4;letter-spacing:0.043px;">MEM</span>
<div class="abs" style="left:820.40px;top:25.70px;width:21.60px;height:0.90px;background:#9a9a9a"></div>
<svg style="left:851.20px;top:3.90px" width="8.00" height="7.60" viewBox="0 0 8 7.600" ><path d="M4 0L8 4.200H5.800V7.600H2.200V4.200H0Z" fill="#ee2a33"/></svg>
<svg style="left:851.20px;top:16.30px" width="8.00" height="7.60" viewBox="0 0 8 7.600" ><path d="M4 7.600L8 3.400H5.800V0H2.200V3.400H0Z" fill="#4a90d9"/></svg>
<span class="t mono" style="left:878.20px;top:2.80px;font-size:9.90px;color:#fff;letter-spacing:0.030px;">0.00</span>
<span class="t mono" style="left:913.80px;top:2.80px;font-size:9.90px;color:#fff;">B</span>
<span class="t mono" style="left:878.20px;top:15.00px;font-size:9.90px;color:#fff;letter-spacing:0.030px;">0.00</span>
<span class="t mono" style="left:913.80px;top:15.00px;font-size:9.90px;color:#fff;">B</span>
<svg style="left:925.60px;top:9.10px" width="10.00" height="10.00" viewBox="-10 -10 20 20" ><path d="M-1 -8.500A8.600 8.600 0 1 0 8.500 3.200A7 7 0 0 1 -1 -8.500Z" fill="none" stroke="#fff" stroke-width="1.900" stroke-linejoin="round"/></svg>
<span class="t" style="left:940.30px;top:9.60px;font-size:8.30px;color:#fff;letter-spacing:-0.044px;">30 °F</span>
<div class="abs" style="left:968.90px;top:9.10px;width:6.40px;height:10.80px;background:#f4f4f4;border-radius:3.200px"></div>
<svg style="left:970.30px;top:10.70px" width="3.60" height="7.60" viewBox="0 0 7.200 15.200" ><path d="M0.800 4.200L6.200 10.800L3.400 14V1.200L6.200 4.400L0.800 11" fill="none" stroke="#2b2b2b" stroke-width="1.500" stroke-linejoin="round" stroke-linecap="round"/></svg>
<svg style="left:983.60px;top:9.10px" width="8.80" height="10.40" viewBox="0 0 17.600 20.800" ><rect x="1.200" y="3.400" width="15.200" height="16.200" rx="1.600" fill="none" stroke="#fff" stroke-width="2.200"/><rect x="5.800" y="0.600" width="6" height="4.400" fill="#fff"/><path d="M8.800 7V13" stroke="#fff" stroke-width="2.600"/><circle cx="8.800" cy="16" r="1.400" fill="#fff"/></svg>
<svg style="left:999.20px;top:9.10px" width="10.00" height="10.60" viewBox="0 0 20 21.200" ><path d="M10 1.200C12.500 2.800 15.500 3.600 18.800 3.800C18.600 11 16 16.500 10 20C4 16.500 1.400 11 1.200 3.800C4.500 3.600 7.500 2.800 10 1.200Z" fill="none" stroke="#fff" stroke-width="1.800"/><path d="M10 5C11.500 6 13.400 6.500 15.400 6.700C15.200 11 13.600 14.400 10 16.600C6.400 14.400 4.800 11 4.600 6.700C6.600 6.500 8.500 6 10 5Z" fill="#d8d8d8"/></svg>
<svg style="left:1014.40px;top:10.70px" width="11.20" height="7.60" viewBox="0 0 22.400 15.200" ><ellipse cx="11.200" cy="7.600" rx="10.200" ry="6" fill="none" stroke="#8e8e8e" stroke-width="1.700" transform="rotate(-12 11.200 7.600)"/><path d="M6 8.500H16.500" stroke="#9a9a9a" stroke-width="2.600"/></svg>
<svg style="left:1032.60px;top:8.90px" width="10.40" height="10.80" viewBox="0 0 20.800 21.600" ><path d="M3 15.500C5.500 13 4.500 7.500 8 5A5.500 5.500 0 0 1 16.500 9C17 12 17 14 19 15.500Z" fill="#fff" transform="rotate(18 10 10)"/><circle cx="8.600" cy="19" r="2.200" fill="#fff"/><circle cx="15.500" cy="4" r="2.600" fill="#fff"/></svg>
<span class="t" style="left:1047.40px;top:10.50px;font-size:8.60px;color:#fff;font-weight:bold;">1</span>
<svg style="left:1058.20px;top:9.10px" width="9.60" height="10.40" viewBox="0 0 19.200 20.800" ><rect x="1.200" y="1.200" width="16.800" height="18.400" rx="2" fill="none" stroke="#fff" stroke-width="2.200"/><rect x="5.600" y="9" width="8" height="7" fill="#fff"/><circle cx="9.600" cy="6.500" r="1.600" fill="#fff"/></svg>
<svg style="left:1074.40px;top:9.50px" width="11.20" height="9.60" viewBox="0 0 22.400 19.200" fill="none" stroke="#fff" stroke-width="2.100" stroke-linecap="round"><path d="M1.500 7A14 14 0 0 1 20.900 7" /><path d="M4.800 10.800A9.400 9.400 0 0 1 17.600 10.800"/><path d="M8 14.400A4.800 4.800 0 0 1 14.400 14.400"/><circle cx="11.200" cy="17.200" r="1.500" fill="#fff" stroke="none"/></svg>
<svg style="left:1092.80px;top:9.10px" width="9.60" height="10.40" viewBox="0 0 19.200 20.800" ><path d="M6.200 16.500V2.500H17.600V15" fill="none" stroke="#fff" stroke-width="2.200"/><path d="M6.200 2.500H17.600V6H6.200Z" fill="#fff"/><ellipse cx="4" cy="17" rx="3.400" ry="2.600" fill="#fff"/><ellipse cx="15.400" cy="15.500" rx="3.400" ry="2.600" fill="#fff"/></svg>
<svg style="left:1111.00px;top:8.70px" width="8.00" height="11.20" viewBox="0 0 16 22.400" ><rect x="1.300" y="3.600" width="13.400" height="17.500" rx="2" fill="none" stroke="#fff" stroke-width="2.200"/><rect x="5" y="0.800" width="6" height="3.200" fill="#fff"/><rect x="4" y="14.500" width="8" height="4.200" fill="#fff"/></svg>
<span class="t" style="left:1126.75px;top:10.50px;font-size:8.90px;color:#fff;letter-spacing:0.062px;-webkit-text-stroke:0.4px #fff;">Monday November 10, 6:43:09 PM</span>
<div class="abs" style="left:1272.00px;top:0.70px;width:8.00px;height:26.80px;background:#3c3c3c"></div>
</div>
</body>
</html>
